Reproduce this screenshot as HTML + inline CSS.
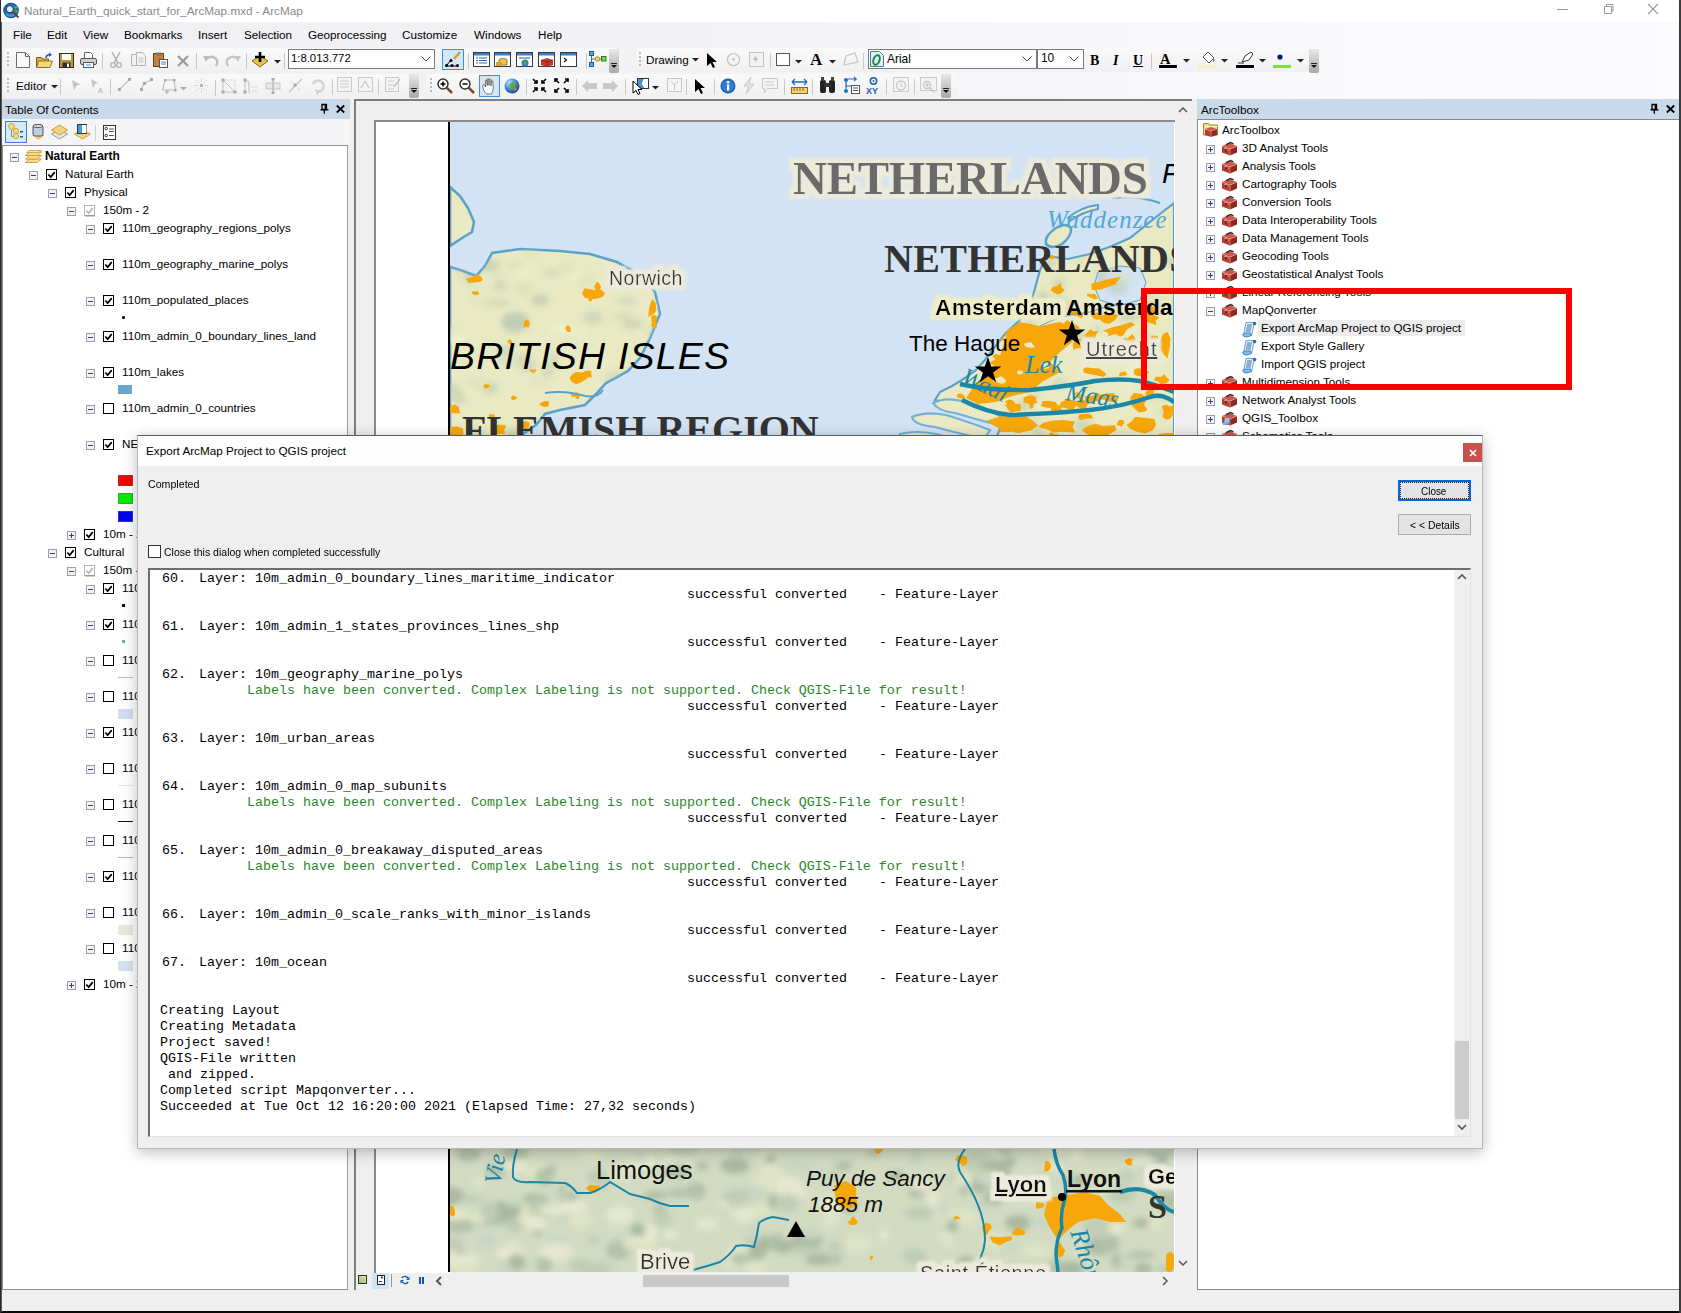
<!DOCTYPE html><html><head><meta charset="utf-8"><style>
*{box-sizing:border-box}
html,body{margin:0;padding:0}
body{width:1681px;height:1313px;position:relative;overflow:hidden;background:#f0eff0;font-family:"Liberation Sans",sans-serif;color:#000}
.a{position:absolute}
.t{position:absolute;white-space:pre;line-height:1;color:#000}
.m{position:absolute;white-space:pre;line-height:1;font-family:"Liberation Mono",monospace;font-size:13.33px;color:#000}
svg{position:absolute;overflow:visible}
</style></head><body><div class="a" style="left:0px;top:0px;width:1681px;height:22px;background:#ffffff"></div>
<svg style="left:3px;top:2px" width="17" height="17" viewBox="0 0 17 17"><circle cx="8" cy="8.5" r="7.8" fill="#1a4f8a"/><circle cx="8" cy="8.5" r="6.5" fill="#2a78b8"/><path d="M3 12q3 3 8 1" stroke="#3a9ae0" stroke-width="2" fill="none"/><circle cx="6.8" cy="7.2" r="3.6" fill="#cfeefa" stroke="#1a2a3a" stroke-width="1"/><path d="M12 6l2-1.5M12.5 10l2-1" stroke="#49c040" stroke-width="1.8"/><path d="M10 10L15.5 15.5" stroke="#7a3a20" stroke-width="2"/></svg>
<div class="t" style="left:24px;top:5.07px;font-size:11.75px;color:#8a8a8a">Natural_Earth_quick_start_for_ArcMap.mxd - ArcMap</div>
<div class="a" style="left:1557px;top:9px;width:11px;height:1px;background:#999"></div>
<svg style="left:1602px;top:3px" width="12" height="12" viewBox="0 0 12 12"><path d="M2.5 3.5h7v7h-7z M4.5 3.5v-2h6.5v6.5h-1.5" fill="none" stroke="#999" stroke-width="1"/></svg>
<svg style="left:1647px;top:3px" width="12" height="12" viewBox="0 0 12 12"><path d="M1 1L11 11M11 1L1 11" stroke="#999" stroke-width="1.1"/></svg>
<div class="a" style="left:0px;top:22px;width:1681px;height:77px;background:linear-gradient(90deg,#efeef0 0%,#f3f2f4 40%,#f9f8fa 80%,#fbfafc 100%)"></div>
<div class="t" style="left:13px;top:29.119999999999997px;font-size:11.7px;">File</div>
<div class="t" style="left:47px;top:29.119999999999997px;font-size:11.7px;">Edit</div>
<div class="t" style="left:83px;top:29.119999999999997px;font-size:11.7px;">View</div>
<div class="t" style="left:124px;top:29.119999999999997px;font-size:11.7px;">Bookmarks</div>
<div class="t" style="left:198px;top:29.119999999999997px;font-size:11.7px;">Insert</div>
<div class="t" style="left:244px;top:29.119999999999997px;font-size:11.7px;">Selection</div>
<div class="t" style="left:308px;top:29.119999999999997px;font-size:11.7px;">Geoprocessing</div>
<div class="t" style="left:402px;top:29.119999999999997px;font-size:11.7px;">Customize</div>
<div class="t" style="left:474px;top:29.119999999999997px;font-size:11.7px;">Windows</div>
<div class="t" style="left:538px;top:29.119999999999997px;font-size:11.7px;">Help</div>
<div class="a" style="left:4px;top:48px;width:614px;height:24px;background:linear-gradient(#f9f9fa,#f1f1f3);border-radius:2px"></div>
<div class="a" style="left:636px;top:48px;width:684px;height:24px;background:linear-gradient(#f9f9fa,#f1f1f3);border-radius:2px"></div>
<div class="a" style="left:4px;top:74px;width:414px;height:23px;background:linear-gradient(#f9f9fa,#f1f1f3);border-radius:2px"></div>
<div class="a" style="left:426px;top:74px;width:532px;height:23px;background:linear-gradient(#f9f9fa,#f1f1f3);border-radius:2px"></div>
<div class="a" style="left:7px;top:52px;width:2px;height:2px;background:#b8b8b8"></div>
<div class="a" style="left:7px;top:56px;width:2px;height:2px;background:#b8b8b8"></div>
<div class="a" style="left:7px;top:60px;width:2px;height:2px;background:#b8b8b8"></div>
<div class="a" style="left:7px;top:64px;width:2px;height:2px;background:#b8b8b8"></div>
<svg style="left:16px;top:52px" width="14" height="16" viewBox="0 0 14 16"><path d="M0.5 0.5h9l4 4v11h-13z" fill="#f7f9fc" stroke="#6c6c6c"/><path d="M9.5 0.5v4h4" fill="none" stroke="#6c6c6c"/></svg>
<svg style="left:36px;top:52px" width="17" height="16" viewBox="0 0 17 16"><path d="M0.5 5.5h5l1 1.5h6v8h-12z" fill="#d9b040" stroke="#7c5a10"/><path d="M2.5 9h14l-2.5 6.5h-13.5z" fill="#f4d978" stroke="#7c5a10" stroke-width=".8"/><path d="M10 6 q0 -3 4 -3.5" stroke="#1f5fa8" stroke-width="1.5" fill="none"/><path d="M13 0.5l3 2.3l-3 2.2z" fill="#1f5fa8"/></svg>
<svg style="left:59px;top:53px" width="15" height="15" viewBox="0 0 15 15"><rect x="0.5" y="0.5" width="14" height="14" fill="#b49a48" stroke="#3a2a0a"/><rect x="3" y="1" width="9" height="6" fill="#fafafa"/><rect x="3.5" y="9.5" width="8" height="5" fill="#2e2e2e"/><rect x="8" y="10.5" width="2" height="3.5" fill="#eee"/></svg>
<svg style="left:80px;top:52px" width="17" height="16" viewBox="0 0 17 16"><path d="M4.5 0.5h6l2 2v4h-8z" fill="#fff" stroke="#666"/><rect x="0.5" y="6.5" width="16" height="6" rx="1.5" fill="#cfcfcf" stroke="#555"/><rect x="3.5" y="10.5" width="10" height="5" fill="#fff" stroke="#555"/><path d="M6 13h5" stroke="#4a8ad0"/></svg>
<div class="a" style="left:102px;top:53px;width:1px;height:16px;background:#c8c8c8"></div>
<svg style="left:109px;top:52px" width="14" height="16" viewBox="0 0 14 16"><path d="M3 0l6 11M11 0l-6 11" stroke="#b0b0b0" stroke-width="1.5"/><circle cx="4" cy="13" r="2.3" fill="none" stroke="#b0b0b0" stroke-width="1.3"/><circle cx="10" cy="13" r="2.3" fill="none" stroke="#b0b0b0" stroke-width="1.3"/></svg>
<svg style="left:131px;top:52px" width="15" height="16" viewBox="0 0 15 16"><path d="M0.5 2.5h7l2 2v9h-9z" fill="#f3f3f3" stroke="#b3b3b3"/><path d="M5.5 0.5h6l3 3v10h-9z" fill="#f3f3f3" stroke="#b3b3b3"/><path d="M7.5 6h5M7.5 8h5M7.5 10h5" stroke="#c0c0c0"/></svg>
<svg style="left:153px;top:52px" width="15" height="16" viewBox="0 0 15 16"><rect x="0.5" y="1.5" width="10" height="13" fill="#c9803a" stroke="#6b3e14"/><rect x="3" y="0.5" width="5" height="3" fill="#777"/><rect x="6.5" y="7.5" width="8" height="8" fill="#fff" stroke="#555"/><path d="M8 10h5M8 12h5" stroke="#4a8ad0"/></svg>
<svg style="left:177px;top:55px" width="12" height="12" viewBox="0 0 12 12"><path d="M1 1L11 11M11 1L1 11" stroke="#9a9a9a" stroke-width="2.2"/></svg>
<div class="a" style="left:196px;top:53px;width:1px;height:16px;background:#c8c8c8"></div>
<svg style="left:203px;top:54px" width="16" height="13" viewBox="0 0 16 13"><path d="M3 5 q6 -5 11 1 q1 3 -1 6" fill="none" stroke="#bdbdbd" stroke-width="2.4"/><path d="M0 2l6 0l-3 6z" fill="#bdbdbd"/></svg>
<svg style="left:225px;top:54px" width="16" height="13" viewBox="0 0 16 13"><path d="M13 5 q-6 -5 -11 1 q-1 3 1 6" fill="none" stroke="#c4c4c4" stroke-width="2.4"/><path d="M16 2l-6 0l3 6z" fill="#c4c4c4"/></svg>
<div class="a" style="left:246px;top:53px;width:1px;height:16px;background:#c8c8c8"></div>
<svg style="left:251px;top:51px" width="18" height="18" viewBox="0 0 18 18"><path d="M1 10l8-5l8 5l-8 6z" fill="#e9c24a" stroke="#8a6d1a"/><path d="M9 1v10M4 6h10" stroke="#000" stroke-width="2.6"/></svg>
<svg style="left:274px;top:60px" width="7" height="4"><path d="M0 0h7l-3.5 3.5z" fill="#222"/></svg>
<div class="a" style="left:284px;top:53px;width:1px;height:16px;background:#c8c8c8"></div>
<div class="a" style="left:288px;top:49px;width:147px;height:20px;background:#fff;border:1px solid #7a7a7a"></div>
<div class="t" style="left:291px;top:53.49px;font-size:11.3px;">1:8.013.772</div>
<svg style="left:421px;top:56px" width="10" height="6"><path d="M0.5 0.5l4.5 4.5l4.5-4.5" fill="none" stroke="#444" stroke-width="1"/></svg>
<div class="a" style="left:442px;top:49px;width:22px;height:21px;background:#d5e6f7;border:1px solid #3d8ee0"></div>
<svg style="left:444px;top:51px" width="18" height="17" viewBox="0 0 18 17"><path d="M2 15h12M2 15l5-6" stroke="#000" stroke-width="1"/><circle cx="2.5" cy="14.5" r="1.5"/><circle cx="8" cy="14.5" r="1.5"/><circle cx="13.5" cy="14.5" r="1.5"/><circle cx="7" cy="9.5" r="1.5"/><path d="M10 8l6-7" stroke="#e39a1a" stroke-width="2.5"/></svg>
<div class="a" style="left:468px;top:53px;width:1px;height:16px;background:#c8c8c8"></div>
<svg style="left:473px;top:52px" width="17" height="15" viewBox="0 0 17 15"><rect x="0.5" y="0.5" width="16" height="14" fill="#fff" stroke="#3a3a3a"/><rect x="1" y="1" width="15" height="2.5" fill="#3d7cc9"/><path d="M3 6h2M6 6h8M3 8.5h2M6 8.5h8M3 11h2M6 11h8" stroke="#2a6ab8" stroke-width="1.2"/></svg>
<svg style="left:494px;top:52px" width="17" height="15" viewBox="0 0 17 15"><rect x="0.5" y="0.5" width="16" height="14" fill="#fff" stroke="#3a3a3a"/><rect x="1" y="1" width="15" height="2.5" fill="#3d7cc9"/><ellipse cx="9" cy="8" rx="4" ry="1.5" fill="#e8c84a" stroke="#8a6a1a" stroke-width=".8"/><rect x="5" y="8" width="8" height="5" fill="#e8c84a"/><path d="M5 8v5h8v-5" fill="none" stroke="#8a6a1a" stroke-width=".8"/><rect x="2" y="10" width="6" height="4" fill="#d4a830"/></svg>
<svg style="left:516px;top:52px" width="17" height="15" viewBox="0 0 17 15"><rect x="0.5" y="0.5" width="16" height="14" fill="#fff" stroke="#3a3a3a"/><rect x="1" y="1" width="15" height="2.5" fill="#3d7cc9"/><rect x="3" y="5" width="11" height="2" fill="#9ab"/><circle cx="9" cy="11" r="3.5" fill="#2f7fc0"/><path d="M7 10q2-2 4 0q0 2-2 3z" fill="#5aaa3a"/></svg>
<svg style="left:538px;top:52px" width="17" height="15" viewBox="0 0 17 15"><rect x="0.5" y="0.5" width="16" height="14" fill="#fff" stroke="#3a3a3a"/><rect x="1" y="1" width="15" height="2.5" fill="#3d7cc9"/><path d="M3 8l6-2l6 2v5l-6 2l-6-2z" fill="#c23a2e"/><path d="M3 8l6 2l6-2M9 10v5" fill="none" stroke="#8a1a14" stroke-width=".8"/></svg>
<svg style="left:560px;top:52px" width="17" height="15" viewBox="0 0 17 15"><rect x="0.5" y="0.5" width="16" height="14" fill="#fff" stroke="#3a3a3a"/><rect x="1" y="1" width="15" height="2.5" fill="#3d7cc9"/><path d="M4 6l2.5 2l-2.5 2" fill="none" stroke="#111" stroke-width="1.2"/></svg>
<div class="a" style="left:586px;top:53px;width:1px;height:16px;background:#c8c8c8"></div>
<svg style="left:589px;top:51px" width="18" height="16" viewBox="0 0 18 16"><path d="M2.5 3v10M2.5 8h13" stroke="#3a6fa0" stroke-width="1"/><rect x="0.5" y="0.5" width="4" height="4" fill="#5aa8e8" stroke="#1a5a9a"/><rect x="0.5" y="11.5" width="4" height="4" fill="#5aa8e8" stroke="#1a5a9a"/><circle cx="8.5" cy="8" r="2.3" fill="#f0d070" stroke="#9a7a2a" stroke-width=".8"/><rect x="12.5" y="5.5" width="4.5" height="4.5" fill="#8cd04a" stroke="#2a7a2a"/></svg>
<div class="a" style="left:609px;top:49px;width:10px;height:24px;background:linear-gradient(#e8e8e8,#a9a9a9);border-radius:0 0 2px 2px"></div>
<div class="a" style="left:611px;top:63px;width:6px;height:1px;background:#222"></div>
<svg style="left:611px;top:65px" width="6" height="4"><path d="M0 0h6l-3 3z" fill="#111"/></svg>
<div class="a" style="left:639px;top:52px;width:2px;height:2px;background:#b8b8b8"></div>
<div class="a" style="left:639px;top:56px;width:2px;height:2px;background:#b8b8b8"></div>
<div class="a" style="left:639px;top:60px;width:2px;height:2px;background:#b8b8b8"></div>
<div class="a" style="left:639px;top:64px;width:2px;height:2px;background:#b8b8b8"></div>
<div class="t" style="left:646px;top:54.12px;font-size:11.7px;">Drawing</div>
<svg style="left:692px;top:58px" width="7" height="4"><path d="M0 0h7l-3.5 3.5z" fill="#222"/></svg>
<svg style="left:706px;top:52px" width="12" height="16" viewBox="0 0 12 16"><path d="M1 1v13l3.5-3l2.5 5l2-1l-2.5-5h4.5z" fill="#000"/></svg>
<svg style="left:726px;top:52px" width="15" height="15" viewBox="0 0 15 15"><circle cx="7.5" cy="7.5" r="6" fill="none" stroke="#c0c0c0" stroke-width="1.2"/><rect x="6.5" y="6.5" width="2" height="2" fill="#aaa"/></svg>
<svg style="left:749px;top:52px" width="15" height="15" viewBox="0 0 15 15"><rect x="0.5" y="0.5" width="14" height="14" fill="#f2f2f2" stroke="#c4c4c4"/><path d="M4 7h5M6.5 4.5v5" stroke="#bbb" stroke-width="1.6"/></svg>
<div class="a" style="left:770px;top:53px;width:1px;height:16px;background:#c8c8c8"></div>
<div class="a" style="left:776px;top:53px;width:14px;height:13px;background:#fff;border:1px solid #555"></div>
<svg style="left:795px;top:60px" width="7" height="4"><path d="M0 0h7l-3.5 3.5z" fill="#222"/></svg>
<div class="t" style="left:810px;top:51.19px;font-size:17px;font-family:'Liberation Serif';font-weight:bold">A</div>
<svg style="left:829px;top:60px" width="7" height="4"><path d="M0 0h7l-3.5 3.5z" fill="#222"/></svg>
<svg style="left:843px;top:52px" width="16" height="15" viewBox="0 0 16 15"><path d="M1 13l2-9l9-3l3 9z" fill="none" stroke="#c6c6c6" stroke-width="1.2"/></svg>
<div class="a" style="left:863px;top:53px;width:1px;height:16px;background:#c8c8c8"></div>
<div class="a" style="left:868px;top:49px;width:169px;height:20px;background:#fff;border:1px solid #7a7a7a"></div>
<svg style="left:870px;top:51px" width="14" height="16" viewBox="0 0 14 16"><path d="M0.5 0.5h9l4 4v11h-13z" fill="#dfeffa" stroke="#4a7aa0"/><ellipse cx="6.5" cy="9" rx="3" ry="5" fill="none" stroke="#1f8a3a" stroke-width="2" transform="rotate(20 6.5 9)"/></svg>
<div class="t" style="left:887px;top:53.93px;font-size:11.9px;">Arial</div>
<svg style="left:1022px;top:56px" width="10" height="6"><path d="M0.5 0.5l4.5 4.5l4.5-4.5" fill="none" stroke="#444" stroke-width="1"/></svg>
<div class="a" style="left:1037px;top:49px;width:47px;height:20px;background:#fff;border:1px solid #7a7a7a"></div>
<div class="t" style="left:1041px;top:52.93px;font-size:11.9px;">10</div>
<svg style="left:1069px;top:56px" width="10" height="6"><path d="M0.5 0.5l4.5 4.5l4.5-4.5" fill="none" stroke="#444" stroke-width="1"/></svg>
<div class="t" style="left:1090px;top:53.980000000000004px;font-size:14px;font-family:'Liberation Serif';font-weight:bold">B</div>
<div class="t" style="left:1113px;top:53.980000000000004px;font-size:14px;font-family:'Liberation Serif';font-style:italic;font-weight:bold">I</div>
<div class="t" style="left:1133px;top:53.980000000000004px;font-size:14px;font-family:'Liberation Serif';font-weight:bold;text-decoration:underline">U</div>
<div class="a" style="left:1151px;top:53px;width:1px;height:16px;background:#c8c8c8"></div>
<div class="t" style="left:1160px;top:51.51px;font-size:14.5px;font-family:'Liberation Serif';font-weight:bold">A</div>
<div class="a" style="left:1159px;top:65px;width:18px;height:3px;background:#000"></div>
<svg style="left:1183px;top:59px" width="7" height="4"><path d="M0 0h7l-3.5 3.5z" fill="#222"/></svg>
<svg style="left:1200px;top:51px" width="16" height="14" viewBox="0 0 16 14"><path d="M3 6l5-5l6 6l-5 5z" fill="#fff" stroke="#555"/><path d="M13 7q2 2 0 4" fill="none" stroke="#666"/></svg>
<div class="a" style="left:1198px;top:65px;width:18px;height:3px;background:#f4f1c0"></div>
<svg style="left:1221px;top:59px" width="7" height="4"><path d="M0 0h7l-3.5 3.5z" fill="#222"/></svg>
<svg style="left:1237px;top:51px" width="18" height="14" viewBox="0 0 18 14"><path d="M5 11l3-6l6-4l2 2l-4 6z" fill="#fff" stroke="#333"/><path d="M1 12h6" stroke="#333"/></svg>
<div class="a" style="left:1236px;top:65px;width:18px;height:3px;background:#000"></div>
<svg style="left:1259px;top:59px" width="7" height="4"><path d="M0 0h7l-3.5 3.5z" fill="#222"/></svg>
<svg style="left:1277px;top:54px" width="6" height="6"><circle cx="3" cy="3" r="2.6" fill="#001a6e"/></svg>
<div class="a" style="left:1273px;top:65px;width:18px;height:3px;background:#7de33a"></div>
<svg style="left:1297px;top:59px" width="7" height="4"><path d="M0 0h7l-3.5 3.5z" fill="#222"/></svg>
<div class="a" style="left:1309px;top:49px;width:10px;height:24px;background:linear-gradient(#e8e8e8,#a9a9a9);border-radius:0 0 2px 2px"></div>
<div class="a" style="left:1311px;top:63px;width:6px;height:1px;background:#222"></div>
<svg style="left:1311px;top:65px" width="6" height="4"><path d="M0 0h6l-3 3z" fill="#111"/></svg>
<div class="a" style="left:7px;top:78px;width:2px;height:2px;background:#b8b8b8"></div>
<div class="a" style="left:7px;top:82px;width:2px;height:2px;background:#b8b8b8"></div>
<div class="a" style="left:7px;top:86px;width:2px;height:2px;background:#b8b8b8"></div>
<div class="a" style="left:7px;top:90px;width:2px;height:2px;background:#b8b8b8"></div>
<div class="t" style="left:16px;top:80.12px;font-size:11.7px;">Editor</div>
<svg style="left:51px;top:85px" width="7" height="4"><path d="M0 0h7l-3.5 3.5z" fill="#222"/></svg>
<div class="a" style="left:60px;top:79px;width:1px;height:16px;background:#c8c8c8"></div>
<svg style="left:71px;top:79px" width="12" height="12"><path d="M1 1l9 5h-4l-3 5z" fill="#c3c3c3"/></svg>
<svg style="left:90px;top:78px" width="16" height="16"><path d="M1 1l8 4.5h-3.5l-2.5 4.5z" fill="#c3c3c3"/><text x="7.5" y="15" font-size="8" font-weight="bold" fill="#c3c3c3" font-family="Liberation Sans">A</text></svg>
<div class="a" style="left:110px;top:79px;width:1px;height:16px;background:#c8c8c8"></div>
<svg style="left:118px;top:78px" width="13" height="13"><path d="M1 12L12 1" stroke="#c3c3c3" stroke-width="1.3"/><rect x="0" y="10" width="3" height="3" fill="#aaa"/><rect x="10" y="0" width="3" height="3" fill="#aaa"/></svg>
<svg style="left:140px;top:78px" width="14" height="13"><path d="M1 12L4 5L12 2" fill="none" stroke="#c3c3c3" stroke-width="1.3"/><rect x="0" y="10" width="3" height="3" fill="#aaa"/><rect x="3" y="4" width="3" height="3" fill="#aaa"/><rect x="10" y="0" width="3" height="3" fill="#aaa"/></svg>
<svg style="left:161px;top:78px" width="16" height="16" viewBox="0 0 16 16"><path d="M4 2h9l1.5 10h-13z" fill="none" stroke="#b9b9b9" stroke-width="1"/><rect x="3" y="1" width="2.5" height="2.5" fill="#a9a9a9"/><rect x="12" y="1" width="2.5" height="2.5" fill="#a9a9a9"/><rect x="13" y="11" width="2.5" height="2.5" fill="#a9a9a9"/><path d="M6 12v4M4 14h4" stroke="#aaa"/></svg>
<svg style="left:180px;top:87px" width="7" height="4"><path d="M0 0h7l-3.5 3.5z" fill="#aaa"/></svg>
<svg style="left:194px;top:78px" width="15" height="15" viewBox="0 0 15 15"><path d="M7.5 0v5M7.5 10v5M0 7.5h5M10 7.5h5M2 2l3 3M13 2l-3 3M2 13l3-3M13 13l-3-3" stroke="#cfcfcf" stroke-width="1" stroke-dasharray="1.5 1"/><rect x="6" y="6" width="3" height="3" fill="#b5b5b5"/></svg>
<div class="a" style="left:215px;top:80px;width:1px;height:16px;background:#c8c8c8"></div>
<svg style="left:221px;top:78px" width="16" height="16" viewBox="0 0 16 16"><path d="M2 2v12h12z" fill="none" stroke="#c0c0c0" stroke-width="1"/><path d="M2 2h12v12" fill="none" stroke="#ccc" stroke-dasharray="1.5 1"/><rect x="0.5" y="0.5" width="3" height="3" fill="#aaa"/><rect x="12.5" y="12.5" width="3" height="3" fill="#aaa"/><rect x="0.5" y="12.5" width="3" height="3" fill="#aaa"/></svg>
<svg style="left:243px;top:78px" width="16" height="16" viewBox="0 0 16 16"><path d="M2 2v13M2 2l4 2v11" fill="none" stroke="#bdbdbd" stroke-width="1"/><rect x="0.5" y="0.5" width="3" height="3" fill="#aaa"/><rect x="0.5" y="12.5" width="3" height="3" fill="#aaa"/><path d="M9 9h6M9 13h6" stroke="#ccc" stroke-dasharray="2 1"/></svg>
<svg style="left:265px;top:78px" width="16" height="16" viewBox="0 0 16 16"><rect x="1" y="5" width="14" height="6" fill="#e6e6e6" stroke="#c6c6c6"/><path d="M8 1v14" stroke="#b5b5b5" stroke-width="1.3"/><rect x="6.5" y="0" width="3" height="2.5" fill="#aaa"/><rect x="6.5" y="13.5" width="3" height="2.5" fill="#aaa"/></svg>
<svg style="left:288px;top:78px" width="15" height="15" viewBox="0 0 15 15"><path d="M1 14L14 1" stroke="#c4c4c4" stroke-width="1.2"/><rect x="5.5" y="5.5" width="3" height="3" fill="#aaa"/><path d="M3 3l2 2M10 10l2 2" stroke="#ccc"/></svg>
<svg style="left:310px;top:78px" width="16" height="16" viewBox="0 0 16 16"><path d="M3 6A5.5 5.5 0 1 1 8 13.5" fill="none" stroke="#d4d4d4" stroke-width="2.5"/><path d="M5 12l3 1.5l-1 3" fill="none" stroke="#ccc" stroke-width="1.5"/></svg>
<div class="a" style="left:332px;top:79px;width:1px;height:16px;background:#c8c8c8"></div>
<svg style="left:337px;top:77px" width="15" height="15"><rect x="0.5" y="0.5" width="14" height="14" fill="#f4f4f4" stroke="#cacaca"/><path d="M3 4h9M3 7h9M3 10h9" stroke="#cfcfcf"/></svg>
<svg style="left:358px;top:77px" width="15" height="15"><rect x="0.5" y="0.5" width="14" height="14" fill="#f4f4f4" stroke="#cacaca"/><path d="M3 11l4-7l4 7" fill="none" stroke="#bbb"/></svg>
<div class="a" style="left:378px;top:79px;width:1px;height:16px;background:#c8c8c8"></div>
<svg style="left:385px;top:77px" width="16" height="15"><rect x="0.5" y="0.5" width="13" height="14" fill="#f4f4f4" stroke="#cacaca"/><path d="M3 4h6M3 8h6M3 12h6" stroke="#ccc"/><path d="M9 10l6-8" stroke="#c0c0c0" stroke-width="1.5"/></svg>
<div class="a" style="left:409px;top:74px;width:10px;height:24px;background:linear-gradient(#e8e8e8,#a9a9a9);border-radius:0 0 2px 2px"></div>
<div class="a" style="left:411px;top:88px;width:6px;height:1px;background:#222"></div>
<svg style="left:411px;top:90px" width="6" height="4"><path d="M0 0h6l-3 3z" fill="#111"/></svg>
<div class="a" style="left:430px;top:78px;width:2px;height:2px;background:#b8b8b8"></div>
<div class="a" style="left:430px;top:82px;width:2px;height:2px;background:#b8b8b8"></div>
<div class="a" style="left:430px;top:86px;width:2px;height:2px;background:#b8b8b8"></div>
<div class="a" style="left:430px;top:90px;width:2px;height:2px;background:#b8b8b8"></div>
<svg style="left:437px;top:78px" width="16" height="16" viewBox="0 0 16 16"><circle cx="6" cy="6" r="5" fill="#fff" stroke="#333" stroke-width="1.5"/><path d="M9.5 9.5L15 15" stroke="#7a4a20" stroke-width="2.5"/><path d="M3.5 6h5M6 3.5v5" stroke="#000" stroke-width="1.5"/></svg>
<svg style="left:459px;top:78px" width="16" height="16" viewBox="0 0 16 16"><circle cx="6" cy="6" r="5" fill="#fff" stroke="#333" stroke-width="1.5"/><path d="M9.5 9.5L15 15" stroke="#7a4a20" stroke-width="2.5"/><path d="M3.5 6h5" stroke="#000" stroke-width="1.5"/></svg>
<div class="a" style="left:479px;top:75px;width:21px;height:22px;background:#d5e6f7;border:1px solid #3d8ee0"></div>
<svg style="left:482px;top:77px" width="15" height="18" viewBox="0 0 15 18"><path d="M4.5 17 C2.5 15 1 12.5 1 10.5 L0.8 8 Q1.3 7 2.3 7.8 L3.5 10 L3.5 3.5 Q4.2 2.5 5 3.5 L5.2 8.5 L5.2 2 Q6 1 6.8 2 L7 8.5 L7.2 2.5 Q8 1.5 8.8 2.5 L9 8.8 L9.3 4 Q10 3 10.8 4 L11.2 11 Q11 15 9.5 17 Z" fill="#fff" stroke="#333" stroke-width=".65"/></svg>
<svg style="left:504px;top:78px" width="16" height="16" viewBox="0 0 16 16"><defs><radialGradient id="glb" cx=".35" cy=".3" r=".8"><stop offset="0" stop-color="#bfe4ff"/><stop offset=".5" stop-color="#3a8ad8"/><stop offset="1" stop-color="#1a3a8a"/></radialGradient></defs><circle cx="8" cy="8" r="7.5" fill="url(#glb)"/><path d="M8 4q3 -1 5 2q-1 2 -3 2q-2 2 -1 4q-2 1 -3 -1q1 -3 -1 -4q1 -2 3 -3z" fill="#6aa040" opacity=".9"/><path d="M10 9q2 0 3 2q-1 2 -3 2z" fill="#a08a40"/></svg>
<div class="a" style="left:526px;top:79px;width:1px;height:16px;background:#c8c8c8"></div>
<svg style="left:532px;top:78px" width="15" height="15" viewBox="0 0 15 15"><path d="M1 1l4 4M14 1l-4 4M1 14l4-4M14 14l-4-4" stroke="#000" stroke-width="1.6"/><path d="M5 2v3h-3M10 2v3h3M5 13v-3h-3M10 13v-3h3" fill="none" stroke="#000" stroke-width="1.6"/></svg>
<svg style="left:554px;top:78px" width="15" height="15" viewBox="0 0 15 15"><path d="M1 1l4 4M14 1l-4 4M1 14l4-4M14 14l-4-4" stroke="#000" stroke-width="1.6"/><path d="M1 4v-3h3M14 4v-3h-3M1 11v3h3M14 11v3h-3" fill="none" stroke="#000" stroke-width="1.6"/></svg>
<div class="a" style="left:576px;top:79px;width:1px;height:16px;background:#c8c8c8"></div>
<svg style="left:582px;top:80px" width="15" height="12" viewBox="0 0 15 12"><path d="M0 6l6-6v3h9v6h-9v3z" fill="#c9c9c9"/></svg>
<svg style="left:603px;top:80px" width="15" height="12" viewBox="0 0 15 12"><path d="M15 6l-6-6v3h-9v6h9v3z" fill="#c9c9c9"/></svg>
<div class="a" style="left:625px;top:79px;width:1px;height:16px;background:#c8c8c8"></div>
<svg style="left:632px;top:78px" width="17" height="17" viewBox="0 0 17 17"><rect x="5.5" y="0.5" width="11" height="10" fill="#fff" stroke="#333"/><path d="M6 1h5l-2 5l3 4h-6z" fill="#3a9ae0"/><path d="M11 1l-2 5l3 4" fill="none" stroke="#555" stroke-width=".7"/><path d="M1 3v12l3-2.5l2 4l2-1l-2-4h4z" fill="#fff" stroke="#000" stroke-width="1"/></svg>
<svg style="left:652px;top:86px" width="7" height="4"><path d="M0 0h7l-3.5 3.5z" fill="#222"/></svg>
<svg style="left:667px;top:78px" width="15" height="14" viewBox="0 0 15 14"><rect x="0.5" y="0.5" width="14" height="13" fill="#f7f7f7" stroke="#c4c4c4"/><path d="M4 3l3.5 4l3.5-4M7.5 7v5" fill="none" stroke="#c4c4c4"/></svg>
<div class="a" style="left:686px;top:79px;width:1px;height:16px;background:#c8c8c8"></div>
<svg style="left:694px;top:78px" width="12" height="16" viewBox="0 0 12 16"><path d="M1 1v13l3.5-3l2.5 5l2-1l-2.5-5h4.5z" fill="#000"/></svg>
<div class="a" style="left:714px;top:79px;width:1px;height:16px;background:#c8c8c8"></div>
<svg style="left:720px;top:78px" width="16" height="16" viewBox="0 0 16 16"><circle cx="8" cy="8" r="7.5" fill="#1f5fb0"/><circle cx="8" cy="8" r="6" fill="#2f7fd0"/><rect x="7" y="6.5" width="2.2" height="6" fill="#fff"/><circle cx="8.1" cy="4.2" r="1.3" fill="#fff"/></svg>
<svg style="left:742px;top:77px" width="14" height="17" viewBox="0 0 14 17"><path d="M9 0l-7 9h5l-3 8l8-10h-5z" fill="#e6e6e6" stroke="#c8c8c8"/></svg>
<svg style="left:762px;top:78px" width="16" height="15" viewBox="0 0 16 15"><path d="M0.5 0.5h15v10h-10l-3 4v-4h-2z" fill="#f4f4f4" stroke="#c8c8c8"/><path d="M3 4h9M3 7h9" stroke="#ccc"/></svg>
<div class="a" style="left:784px;top:79px;width:1px;height:16px;background:#c8c8c8"></div>
<svg style="left:791px;top:78px" width="17" height="16" viewBox="0 0 17 16"><path d="M1 4h15M1 4l3-3M1 4l3 3M16 4l-3-3M16 4l-3 3" stroke="#1a6fc0" stroke-width="1.3" fill="none"/><rect x="0.5" y="9.5" width="16" height="6" fill="#f2d27a" stroke="#8c6a1a"/><path d="M3 10v3M6 10v3M9 10v3M12 10v3" stroke="#8c6a1a"/></svg>
<div class="a" style="left:812px;top:79px;width:1px;height:16px;background:#c8c8c8"></div>
<svg style="left:819px;top:77px" width="17" height="17" viewBox="0 0 17 17"><rect x="1" y="3" width="6" height="13" rx="2" fill="#222"/><rect x="10" y="3" width="6" height="13" rx="2" fill="#222"/><rect x="5" y="6" width="7" height="4" fill="#333"/><rect x="2" y="0" width="3" height="4" fill="#444"/><rect x="12" y="0" width="3" height="4" fill="#444"/></svg>
<svg style="left:843px;top:77px" width="17" height="17" viewBox="0 0 17 17"><circle cx="3" cy="3" r="2" fill="#1a6fc0"/><circle cx="3" cy="14" r="2" fill="#1a6fc0"/><path d="M3 5v7M3 9h5M5 2h8l-2-2M13 2l-2 2" stroke="#1a6fc0" fill="none" stroke-width="1.2"/><rect x="8.5" y="8.5" width="8" height="8" fill="#fff" stroke="#555"/><path d="M10 11h5M10 13.5h5" stroke="#555"/></svg>
<svg style="left:865px;top:77px" width="17" height="18" viewBox="0 0 17 18"><circle cx="8.5" cy="4" r="3.2" fill="none" stroke="#1a5fb0" stroke-width="1.5"/><circle cx="8.5" cy="4" r="1" fill="#1a5fb0"/><text x="1" y="17" font-size="9" font-weight="bold" fill="#1a5fb0" font-family="Liberation Sans">XY</text></svg>
<div class="a" style="left:886px;top:79px;width:1px;height:16px;background:#c8c8c8"></div>
<svg style="left:893px;top:77px" width="16" height="15" viewBox="0 0 16 15"><rect x="0.5" y="0.5" width="15" height="14" fill="#f4f4f4" stroke="#cacaca"/><circle cx="8" cy="8.5" r="4.5" fill="none" stroke="#cacaca" stroke-width="1.3"/><path d="M8 6v3h2" stroke="#c8c8c8" fill="none"/></svg>
<div class="a" style="left:914px;top:79px;width:1px;height:16px;background:#c8c8c8"></div>
<svg style="left:920px;top:77px" width="17" height="16" viewBox="0 0 17 16"><rect x="0.5" y="0.5" width="16" height="13" fill="#f4f4f4" stroke="#cacaca"/><circle cx="7" cy="8" r="3.5" fill="none" stroke="#c4c4c4" stroke-width="1.3"/><path d="M9.5 10.5l5 5M5 8h4M7 6v4" stroke="#c0c0c0" stroke-width="1.2"/></svg>
<div class="a" style="left:941px;top:74px;width:10px;height:24px;background:linear-gradient(#e8e8e8,#a9a9a9);border-radius:0 0 2px 2px"></div>
<div class="a" style="left:943px;top:88px;width:6px;height:1px;background:#222"></div>
<svg style="left:943px;top:90px" width="6" height="4"><path d="M0 0h6l-3 3z" fill="#111"/></svg>
<div class="a" style="left:0px;top:1290px;width:1681px;height:21px;background:#f0eff0"></div>
<div class="a" style="left:0px;top:1311px;width:1681px;height:2px;background:#0a0a0a"></div>
<div class="a" style="left:0px;top:0px;width:1px;height:1313px;background:#2a2a2a"></div>
<div class="a" style="left:1px;top:22px;width:1px;height:1290px;background:#5a5a5a"></div>
<div class="a" style="left:1679px;top:0px;width:2px;height:1313px;background:#3a3a3a"></div>
<div class="a" style="left:2px;top:99px;width:348px;height:20px;background:#c9d9e9"></div>
<div class="t" style="left:5px;top:104.12px;font-size:11.7px;">Table Of Contents</div>
<svg style="left:320px;top:103px" width="9" height="11" viewBox="0 0 9 11"><path d="M2 1.5h4.5v5h-4.5z" fill="none" stroke="#000" stroke-width="1.3"/><rect x="4.6" y="1" width="2.4" height="5.5" fill="#000"/><path d="M0.5 6.8h8" stroke="#000" stroke-width="1.3"/><path d="M4.3 7v3.8" stroke="#000" stroke-width="1.3"/></svg>
<svg style="left:336px;top:105px" width="9" height="8" viewBox="0 0 9 8"><path d="M0.8 0.5L8.2 7.5M8.2 0.5L0.8 7.5" stroke="#000" stroke-width="1.8"/></svg>
<div class="a" style="left:2px;top:119px;width:348px;height:26px;background:#f5f4f6"></div>
<div class="a" style="left:5px;top:121px;width:22px;height:22px;background:#d8eaf9;border:1px solid #2b85e0"></div>
<svg style="left:8px;top:123px" width="17" height="17" viewBox="0 0 17 17"><circle cx="3.5" cy="3.5" r="3" fill="#f0d88a" stroke="#c8a840"/><circle cx="8" cy="8" r="2.6" fill="#f0d88a" stroke="#c8a840"/><circle cx="8" cy="13" r="2.6" fill="#f0d88a" stroke="#c8a840"/><path d="M3.5 6.5v7h2" fill="none" stroke="#888"/><rect x="12" y="8" width="3" height="1.5" fill="#1a5a8a"/><rect x="12" y="13" width="3" height="1.5" fill="#1a5a8a"/></svg>
<svg style="left:32px;top:124px" width="13" height="16" viewBox="0 0 13 16"><path d="M0 11h13l-6.5 5z" fill="#f0cf6a"/><rect x="1" y="1" width="10" height="11" rx="2" fill="#b9d2e6" stroke="#555"/><ellipse cx="6" cy="2" rx="5" ry="1.5" fill="#dfeaf3" stroke="#555"/></svg>
<svg style="left:51px;top:124px" width="17" height="16" viewBox="0 0 17 16"><path d="M0.5 10l8-4l8 4l-8 5z" fill="#e8e8e8" stroke="#999"/><path d="M0.5 6l8-5l8 5l-8 5z" fill="#f2d27a" stroke="#c8a030"/></svg>
<svg style="left:74px;top:124px" width="17" height="16" viewBox="0 0 17 16"><path d="M0.5 10l8-4l8 4l-8 5z" fill="#f2d27a" stroke="#c8a030"/><rect x="3.5" y="0.5" width="9" height="9" fill="#3aa0e0" stroke="#333"/><path d="M8 1v8h4.5v-8z" fill="#fff"/></svg>
<div class="a" style="left:95px;top:125px;width:1px;height:16px;background:#cfcfcf"></div>
<svg style="left:103px;top:125px" width="13" height="15" viewBox="0 0 13 15"><rect x="0.5" y="0.5" width="12" height="14" fill="#fff" stroke="#333"/><circle cx="3.2" cy="3.5" r="1.2" fill="none" stroke="#333"/><circle cx="3.2" cy="10.5" r="1.2" fill="none" stroke="#333"/><path d="M6 4h5M6 6.5h5M6 10.5h5" stroke="#555"/></svg>
<div class="a" style="left:2px;top:145px;width:346px;height:1145px;background:#fff;border:1px solid #8f8f8f;border-right-color:#a0a0a0"></div>
<div class="a" style="left:350px;top:99px;width:4px;height:1191px;background:#f0eff0"></div>
<svg style="left:10px;top:153px" width="9" height="9" viewBox="0 0 9 9"><rect x="0.5" y="0.5" width="8" height="8" fill="#f4f4f4" stroke="#9aa0a8"/><path d="M2 4.5h5" stroke="#2b3f8a"/></svg>
<svg style="left:25px;top:150px" width="17" height="13" viewBox="0 0 17 13"><path d="M0.5 12.5h12l4-3.5h-12z" fill="#f6dc8c" stroke="#c9a240" stroke-width="1"/><path d="M0.5 9h12l4-3.5h-12z" fill="#f6dc8c" stroke="#c9a240" stroke-width="1"/><path d="M0.5 5.5h12l4-3.5h-12z" fill="#f6dc8c" stroke="#c9a240" stroke-width="1"/><path d="M1.5 2.5h12l3-2h-12z" fill="#f8e49c" stroke="#c9a240" stroke-width=".8"/></svg>
<div class="t" style="left:45px;top:150.93px;font-size:11.9px;font-weight:bold">Natural Earth</div>
<svg style="left:29px;top:171px" width="9" height="9" viewBox="0 0 9 9"><rect x="0.5" y="0.5" width="8" height="8" fill="#f4f4f4" stroke="#9aa0a8"/><path d="M2 4.5h5" stroke="#2b3f8a"/></svg>
<svg style="left:46px;top:169px" width="12" height="12" viewBox="0 0 12 12"><rect x="0.5" y="0.5" width="10" height="10" fill="#fff" stroke="#000"/><path d="M2.3 5.5l2.4 2.6l4-5" fill="none" stroke="#000" stroke-width="1.7"/></svg>
<div class="t" style="left:65px;top:168.12px;font-size:11.7px;">Natural Earth</div>
<svg style="left:48px;top:189px" width="9" height="9" viewBox="0 0 9 9"><rect x="0.5" y="0.5" width="8" height="8" fill="#f4f4f4" stroke="#9aa0a8"/><path d="M2 4.5h5" stroke="#2b3f8a"/></svg>
<svg style="left:65px;top:187px" width="12" height="12" viewBox="0 0 12 12"><rect x="0.5" y="0.5" width="10" height="10" fill="#fff" stroke="#000"/><path d="M2.3 5.5l2.4 2.6l4-5" fill="none" stroke="#000" stroke-width="1.7"/></svg>
<div class="t" style="left:84px;top:186.12px;font-size:11.7px;">Physical</div>
<svg style="left:67px;top:207px" width="9" height="9" viewBox="0 0 9 9"><rect x="0.5" y="0.5" width="8" height="8" fill="#f4f4f4" stroke="#9aa0a8"/><path d="M2 4.5h5" stroke="#2b3f8a"/></svg>
<svg style="left:84px;top:205px" width="12" height="12" viewBox="0 0 12 12"><rect x="0.5" y="0.5" width="10" height="10" fill="#fff" stroke="#b8b8b8"/><path d="M2.3 5.5l2.4 2.6l4-5" fill="none" stroke="#b8b8b8" stroke-width="1.7"/><rect x="1" y="10" width="10" height="1.5" fill="#999"/></svg>
<div class="t" style="left:103px;top:204.12px;font-size:11.7px;">150m - 2</div>
<svg style="left:86px;top:225px" width="9" height="9" viewBox="0 0 9 9"><rect x="0.5" y="0.5" width="8" height="8" fill="#f4f4f4" stroke="#9aa0a8"/><path d="M2 4.5h5" stroke="#2b3f8a"/></svg>
<svg style="left:103px;top:223px" width="12" height="12" viewBox="0 0 12 12"><rect x="0.5" y="0.5" width="10" height="10" fill="#fff" stroke="#000"/><path d="M2.3 5.5l2.4 2.6l4-5" fill="none" stroke="#000" stroke-width="1.7"/></svg>
<div class="t" style="left:122px;top:222.12px;font-size:11.7px;">110m_geography_regions_polys</div>
<svg style="left:86px;top:261px" width="9" height="9" viewBox="0 0 9 9"><rect x="0.5" y="0.5" width="8" height="8" fill="#f4f4f4" stroke="#9aa0a8"/><path d="M2 4.5h5" stroke="#2b3f8a"/></svg>
<svg style="left:103px;top:259px" width="12" height="12" viewBox="0 0 12 12"><rect x="0.5" y="0.5" width="10" height="10" fill="#fff" stroke="#000"/><path d="M2.3 5.5l2.4 2.6l4-5" fill="none" stroke="#000" stroke-width="1.7"/></svg>
<div class="t" style="left:122px;top:258.12px;font-size:11.7px;">110m_geography_marine_polys</div>
<svg style="left:86px;top:297px" width="9" height="9" viewBox="0 0 9 9"><rect x="0.5" y="0.5" width="8" height="8" fill="#f4f4f4" stroke="#9aa0a8"/><path d="M2 4.5h5" stroke="#2b3f8a"/></svg>
<svg style="left:103px;top:295px" width="12" height="12" viewBox="0 0 12 12"><rect x="0.5" y="0.5" width="10" height="10" fill="#fff" stroke="#000"/><path d="M2.3 5.5l2.4 2.6l4-5" fill="none" stroke="#000" stroke-width="1.7"/></svg>
<div class="t" style="left:122px;top:294.12px;font-size:11.7px;">110m_populated_places</div>
<div class="a" style="left:122px;top:316px;width:3px;height:3px;background:#111;border-radius:1px"></div>
<svg style="left:86px;top:333px" width="9" height="9" viewBox="0 0 9 9"><rect x="0.5" y="0.5" width="8" height="8" fill="#f4f4f4" stroke="#9aa0a8"/><path d="M2 4.5h5" stroke="#2b3f8a"/></svg>
<svg style="left:103px;top:331px" width="12" height="12" viewBox="0 0 12 12"><rect x="0.5" y="0.5" width="10" height="10" fill="#fff" stroke="#000"/><path d="M2.3 5.5l2.4 2.6l4-5" fill="none" stroke="#000" stroke-width="1.7"/></svg>
<div class="t" style="left:122px;top:330.12px;font-size:11.7px;">110m_admin_0_boundary_lines_land</div>
<svg style="left:86px;top:369px" width="9" height="9" viewBox="0 0 9 9"><rect x="0.5" y="0.5" width="8" height="8" fill="#f4f4f4" stroke="#9aa0a8"/><path d="M2 4.5h5" stroke="#2b3f8a"/></svg>
<svg style="left:103px;top:367px" width="12" height="12" viewBox="0 0 12 12"><rect x="0.5" y="0.5" width="10" height="10" fill="#fff" stroke="#000"/><path d="M2.3 5.5l2.4 2.6l4-5" fill="none" stroke="#000" stroke-width="1.7"/></svg>
<div class="t" style="left:122px;top:366.12px;font-size:11.7px;">110m_lakes</div>
<div class="a" style="left:118px;top:385px;width:14px;height:9px;background:#6aa6cf"></div>
<svg style="left:86px;top:405px" width="9" height="9" viewBox="0 0 9 9"><rect x="0.5" y="0.5" width="8" height="8" fill="#f4f4f4" stroke="#9aa0a8"/><path d="M2 4.5h5" stroke="#2b3f8a"/></svg>
<svg style="left:103px;top:403px" width="12" height="12" viewBox="0 0 12 12"><rect x="0.5" y="0.5" width="10" height="10" fill="#fff" stroke="#000"/></svg>
<div class="t" style="left:122px;top:402.12px;font-size:11.7px;">110m_admin_0_countries</div>
<svg style="left:86px;top:441px" width="9" height="9" viewBox="0 0 9 9"><rect x="0.5" y="0.5" width="8" height="8" fill="#f4f4f4" stroke="#9aa0a8"/><path d="M2 4.5h5" stroke="#2b3f8a"/></svg>
<svg style="left:103px;top:439px" width="12" height="12" viewBox="0 0 12 12"><rect x="0.5" y="0.5" width="10" height="10" fill="#fff" stroke="#000"/><path d="M2.3 5.5l2.4 2.6l4-5" fill="none" stroke="#000" stroke-width="1.7"/></svg>
<div class="t" style="left:122px;top:438.12px;font-size:11.7px;">NE</div>
<div class="a" style="left:118px;top:475px;width:15px;height:11px;background:#f00;border:1px solid #a33"></div>
<div class="a" style="left:118px;top:493px;width:15px;height:11px;background:#0e0;border:1px solid #3a3"></div>
<div class="a" style="left:118px;top:511px;width:15px;height:11px;background:#00f;border:1px solid #33a"></div>
<svg style="left:67px;top:531px" width="9" height="9" viewBox="0 0 9 9"><rect x="0.5" y="0.5" width="8" height="8" fill="#f4f4f4" stroke="#9aa0a8"/><path d="M2 4.5h5" stroke="#2b3f8a"/><path d="M4.5 2v5" stroke="#2b3f8a"/></svg>
<svg style="left:84px;top:529px" width="12" height="12" viewBox="0 0 12 12"><rect x="0.5" y="0.5" width="10" height="10" fill="#fff" stroke="#000"/><path d="M2.3 5.5l2.4 2.6l4-5" fill="none" stroke="#000" stroke-width="1.7"/></svg>
<div class="t" style="left:103px;top:528.12px;font-size:11.7px;">10m - 2</div>
<svg style="left:48px;top:549px" width="9" height="9" viewBox="0 0 9 9"><rect x="0.5" y="0.5" width="8" height="8" fill="#f4f4f4" stroke="#9aa0a8"/><path d="M2 4.5h5" stroke="#2b3f8a"/></svg>
<svg style="left:65px;top:547px" width="12" height="12" viewBox="0 0 12 12"><rect x="0.5" y="0.5" width="10" height="10" fill="#fff" stroke="#000"/><path d="M2.3 5.5l2.4 2.6l4-5" fill="none" stroke="#000" stroke-width="1.7"/></svg>
<div class="t" style="left:84px;top:546.12px;font-size:11.7px;">Cultural</div>
<svg style="left:67px;top:567px" width="9" height="9" viewBox="0 0 9 9"><rect x="0.5" y="0.5" width="8" height="8" fill="#f4f4f4" stroke="#9aa0a8"/><path d="M2 4.5h5" stroke="#2b3f8a"/></svg>
<svg style="left:84px;top:565px" width="12" height="12" viewBox="0 0 12 12"><rect x="0.5" y="0.5" width="10" height="10" fill="#fff" stroke="#b8b8b8"/><path d="M2.3 5.5l2.4 2.6l4-5" fill="none" stroke="#b8b8b8" stroke-width="1.7"/><rect x="1" y="10" width="10" height="1.5" fill="#999"/></svg>
<div class="t" style="left:103px;top:564.12px;font-size:11.7px;">150m - 2</div>
<svg style="left:86px;top:585px" width="9" height="9" viewBox="0 0 9 9"><rect x="0.5" y="0.5" width="8" height="8" fill="#f4f4f4" stroke="#9aa0a8"/><path d="M2 4.5h5" stroke="#2b3f8a"/></svg>
<svg style="left:103px;top:583px" width="12" height="12" viewBox="0 0 12 12"><rect x="0.5" y="0.5" width="10" height="10" fill="#fff" stroke="#000"/><path d="M2.3 5.5l2.4 2.6l4-5" fill="none" stroke="#000" stroke-width="1.7"/></svg>
<div class="t" style="left:122px;top:582.12px;font-size:11.7px;">110m_xxx</div>
<svg style="left:86px;top:621px" width="9" height="9" viewBox="0 0 9 9"><rect x="0.5" y="0.5" width="8" height="8" fill="#f4f4f4" stroke="#9aa0a8"/><path d="M2 4.5h5" stroke="#2b3f8a"/></svg>
<svg style="left:103px;top:619px" width="12" height="12" viewBox="0 0 12 12"><rect x="0.5" y="0.5" width="10" height="10" fill="#fff" stroke="#000"/><path d="M2.3 5.5l2.4 2.6l4-5" fill="none" stroke="#000" stroke-width="1.7"/></svg>
<div class="t" style="left:122px;top:618.12px;font-size:11.7px;">110m_xxx</div>
<svg style="left:86px;top:657px" width="9" height="9" viewBox="0 0 9 9"><rect x="0.5" y="0.5" width="8" height="8" fill="#f4f4f4" stroke="#9aa0a8"/><path d="M2 4.5h5" stroke="#2b3f8a"/></svg>
<svg style="left:103px;top:655px" width="12" height="12" viewBox="0 0 12 12"><rect x="0.5" y="0.5" width="10" height="10" fill="#fff" stroke="#000"/></svg>
<div class="t" style="left:122px;top:654.12px;font-size:11.7px;">110m_xxx</div>
<svg style="left:86px;top:693px" width="9" height="9" viewBox="0 0 9 9"><rect x="0.5" y="0.5" width="8" height="8" fill="#f4f4f4" stroke="#9aa0a8"/><path d="M2 4.5h5" stroke="#2b3f8a"/></svg>
<svg style="left:103px;top:691px" width="12" height="12" viewBox="0 0 12 12"><rect x="0.5" y="0.5" width="10" height="10" fill="#fff" stroke="#000"/></svg>
<div class="t" style="left:122px;top:690.12px;font-size:11.7px;">110m_xxx</div>
<svg style="left:86px;top:729px" width="9" height="9" viewBox="0 0 9 9"><rect x="0.5" y="0.5" width="8" height="8" fill="#f4f4f4" stroke="#9aa0a8"/><path d="M2 4.5h5" stroke="#2b3f8a"/></svg>
<svg style="left:103px;top:727px" width="12" height="12" viewBox="0 0 12 12"><rect x="0.5" y="0.5" width="10" height="10" fill="#fff" stroke="#000"/><path d="M2.3 5.5l2.4 2.6l4-5" fill="none" stroke="#000" stroke-width="1.7"/></svg>
<div class="t" style="left:122px;top:726.12px;font-size:11.7px;">110m_xxx</div>
<svg style="left:86px;top:765px" width="9" height="9" viewBox="0 0 9 9"><rect x="0.5" y="0.5" width="8" height="8" fill="#f4f4f4" stroke="#9aa0a8"/><path d="M2 4.5h5" stroke="#2b3f8a"/></svg>
<svg style="left:103px;top:763px" width="12" height="12" viewBox="0 0 12 12"><rect x="0.5" y="0.5" width="10" height="10" fill="#fff" stroke="#000"/></svg>
<div class="t" style="left:122px;top:762.12px;font-size:11.7px;">110m_xxx</div>
<svg style="left:86px;top:801px" width="9" height="9" viewBox="0 0 9 9"><rect x="0.5" y="0.5" width="8" height="8" fill="#f4f4f4" stroke="#9aa0a8"/><path d="M2 4.5h5" stroke="#2b3f8a"/></svg>
<svg style="left:103px;top:799px" width="12" height="12" viewBox="0 0 12 12"><rect x="0.5" y="0.5" width="10" height="10" fill="#fff" stroke="#000"/></svg>
<div class="t" style="left:122px;top:798.12px;font-size:11.7px;">110m_xxx</div>
<svg style="left:86px;top:837px" width="9" height="9" viewBox="0 0 9 9"><rect x="0.5" y="0.5" width="8" height="8" fill="#f4f4f4" stroke="#9aa0a8"/><path d="M2 4.5h5" stroke="#2b3f8a"/></svg>
<svg style="left:103px;top:835px" width="12" height="12" viewBox="0 0 12 12"><rect x="0.5" y="0.5" width="10" height="10" fill="#fff" stroke="#000"/></svg>
<div class="t" style="left:122px;top:834.12px;font-size:11.7px;">110m_xxx</div>
<svg style="left:86px;top:873px" width="9" height="9" viewBox="0 0 9 9"><rect x="0.5" y="0.5" width="8" height="8" fill="#f4f4f4" stroke="#9aa0a8"/><path d="M2 4.5h5" stroke="#2b3f8a"/></svg>
<svg style="left:103px;top:871px" width="12" height="12" viewBox="0 0 12 12"><rect x="0.5" y="0.5" width="10" height="10" fill="#fff" stroke="#000"/><path d="M2.3 5.5l2.4 2.6l4-5" fill="none" stroke="#000" stroke-width="1.7"/></svg>
<div class="t" style="left:122px;top:870.12px;font-size:11.7px;">110m_xxx</div>
<svg style="left:86px;top:909px" width="9" height="9" viewBox="0 0 9 9"><rect x="0.5" y="0.5" width="8" height="8" fill="#f4f4f4" stroke="#9aa0a8"/><path d="M2 4.5h5" stroke="#2b3f8a"/></svg>
<svg style="left:103px;top:907px" width="12" height="12" viewBox="0 0 12 12"><rect x="0.5" y="0.5" width="10" height="10" fill="#fff" stroke="#000"/></svg>
<div class="t" style="left:122px;top:906.12px;font-size:11.7px;">110m_xxx</div>
<svg style="left:86px;top:945px" width="9" height="9" viewBox="0 0 9 9"><rect x="0.5" y="0.5" width="8" height="8" fill="#f4f4f4" stroke="#9aa0a8"/><path d="M2 4.5h5" stroke="#2b3f8a"/></svg>
<svg style="left:103px;top:943px" width="12" height="12" viewBox="0 0 12 12"><rect x="0.5" y="0.5" width="10" height="10" fill="#fff" stroke="#000"/></svg>
<div class="t" style="left:122px;top:942.12px;font-size:11.7px;">110m_xxx</div>
<svg style="left:67px;top:981px" width="9" height="9" viewBox="0 0 9 9"><rect x="0.5" y="0.5" width="8" height="8" fill="#f4f4f4" stroke="#9aa0a8"/><path d="M2 4.5h5" stroke="#2b3f8a"/><path d="M4.5 2v5" stroke="#2b3f8a"/></svg>
<svg style="left:84px;top:979px" width="12" height="12" viewBox="0 0 12 12"><rect x="0.5" y="0.5" width="10" height="10" fill="#fff" stroke="#000"/><path d="M2.3 5.5l2.4 2.6l4-5" fill="none" stroke="#000" stroke-width="1.7"/></svg>
<div class="t" style="left:103px;top:978.12px;font-size:11.7px;">10m - 2</div>
<div class="a" style="left:122px;top:604px;width:3px;height:3px;background:#111"></div>
<div class="a" style="left:122px;top:640px;width:3px;height:3px;background:#7ab"></div>
<div class="a" style="left:118px;top:677px;width:15px;height:1px;background:#9cc3dd"></div>
<div class="a" style="left:118px;top:709px;width:15px;height:10px;background:#cfdff0"></div>
<div class="a" style="left:118px;top:785px;width:15px;height:1px;background:#e6e6e6"></div>
<div class="a" style="left:118px;top:821px;width:15px;height:1px;background:#111"></div>
<div class="a" style="left:118px;top:857px;width:15px;height:1px;background:#b5b5b5"></div>
<div class="a" style="left:118px;top:925px;width:15px;height:10px;background:#e8e8dc"></div>
<div class="a" style="left:118px;top:961px;width:15px;height:10px;background:#d4e2f0"></div>
<div class="a" style="left:354px;top:99px;width:838px;height:1191px;background:#f0eff0;border-top:2px solid #7d7d7d;border-left:2px solid #7d7d7d"></div>
<div class="a" style="left:374px;top:120px;width:801px;height:1153px;background:#fff;border-top:2px solid #8a8a8a;border-left:2px solid #8a8a8a"></div>
<div class="a" style="left:1175px;top:101px;width:17px;height:1172px;background:#f0eff0"></div>
<svg style="left:1178px;top:107px" width="10" height="6"><path d="M1 5l4-4l4 4" fill="none" stroke="#555" stroke-width="1.5"/></svg>
<svg style="left:1178px;top:1260px" width="10" height="6"><path d="M1 1l4 4l4-4" fill="none" stroke="#555" stroke-width="1.5"/></svg>
<div class="a" style="left:356px;top:1273px;width:819px;height:17px;background:#f0eff0"></div>
<div class="a" style="left:643px;top:1275px;width:146px;height:12px;background:#c9c9c9"></div>
<svg style="left:1162px;top:1276px" width="6" height="10"><path d="M1 1l4 4l-4 4" fill="none" stroke="#555" stroke-width="1.5"/></svg>
<svg style="left:436px;top:1276px" width="6" height="10"><path d="M5 1l-4 4l4 4" fill="none" stroke="#555" stroke-width="2"/></svg>
<svg style="left:358px;top:1275px" width="9" height="9" viewBox="0 0 9 9"><defs><linearGradient id="dvg" x1="0" y1="1" x2="1" y2="0"><stop offset="0" stop-color="#8cc070"/><stop offset="1" stop-color="#f0e0a0"/></linearGradient></defs><rect x="0.5" y="0.5" width="8" height="8" fill="url(#dvg)" stroke="#333"/></svg>
<div class="a" style="left:372px;top:1273px;width:17px;height:16px;background:#cfe4f7"></div>
<svg style="left:377px;top:1275px" width="8" height="10" viewBox="0 0 8 10"><rect x="0.5" y="0.5" width="7" height="9" fill="#fff" stroke="#222"/><rect x="4" y="1.5" width="2" height="2" fill="#444"/><path d="M2 6.5h3" stroke="#333"/></svg>
<div class="a" style="left:391px;top:1274px;width:1px;height:13px;background:#999"></div>
<svg style="left:400px;top:1275px" width="10" height="10" viewBox="0 0 10 10"><path d="M8.5 4A3.8 3.8 0 0 0 1.8 3" fill="none" stroke="#1a5fb0" stroke-width="1.4"/><path d="M1.5 6A3.8 3.8 0 0 0 8.2 7" fill="none" stroke="#1a5fb0" stroke-width="1.4"/><path d="M9.5 1.5v3.5h-3.5z M0.5 8.5v-3.5h3.5z" fill="#1a5fb0"/></svg>
<div class="a" style="left:419px;top:1277px;width:2px;height:7px;background:#1a4fa0"></div>
<div class="a" style="left:422px;top:1277px;width:2px;height:7px;background:#1a4fa0"></div>
<svg style="left:450px;top:122px;overflow:hidden" width="724" height="1150" viewBox="450 122 724 1150"><defs><filter id="blur2"><feGaussianBlur stdDeviation="3"/></filter><filter id="halo" x="-20%" y="-50%" width="140%" height="200%"><feMorphology operator="dilate" radius="5" in="SourceAlpha" result="d"/><feGaussianBlur in="d" stdDeviation="1" result="d"/><feFlood flood-color="#ebeadb"/><feComposite in2="d" operator="in"/><feMerge><feMergeNode/><feMergeNode in="SourceGraphic"/></feMerge></filter><filter id="haloY" x="-20%" y="-50%" width="140%" height="200%"><feMorphology operator="dilate" radius="5" in="SourceAlpha" result="d"/><feGaussianBlur in="d" stdDeviation="1" result="d"/><feFlood flood-color="#efedc6"/><feComposite in2="d" operator="in"/><feMerge><feMergeNode/><feMergeNode in="SourceGraphic"/></feMerge></filter></defs><rect x="450" y="122" width="724" height="1150" fill="#d3e3f3"/><path d="M450 187 L460 196 L468 208 L474 222 L472 232 L462 238 L450 246 Z" fill="#e9eac4" stroke="#5aa2cc" stroke-width="2.6"/><path d="M450 267 L463 271 L476 276 L485 266 L492 253 L520 249 L560 251 L590 254 L617 262 L640 275 L655 292 L660 314 L650 338 L640 358 L628 371 L606 383 L596 394 L585 405 L560 410 L545 414 L536 425 L520 436 L505 442 L450 442 Z" fill="#e9eac4" stroke="#5aa2cc" stroke-width="2.6"/><clipPath id="engclip"><path d="M450 267 L463 271 L476 276 L485 266 L492 253 L520 249 L560 251 L590 254 L617 262 L640 275 L655 292 L660 314 L650 338 L640 358 L628 371 L606 383 L596 394 L585 405 L560 410 L545 414 L536 425 L520 436 L505 442 L450 442 Z"/></clipPath><g clip-path="url(#engclip)"><g filter="url(#blur2)" opacity=".5"><ellipse cx="500" cy="354" rx="7" ry="6" fill="#d8dcbc"/><ellipse cx="464" cy="253" rx="11" ry="4" fill="#c6d2b4"/><ellipse cx="490" cy="388" rx="8" ry="6" fill="#aebfa8"/><ellipse cx="584" cy="279" rx="9" ry="7" fill="#d8dcbc"/><ellipse cx="532" cy="253" rx="10" ry="4" fill="#d8dcbc"/><ellipse cx="459" cy="400" rx="11" ry="4" fill="#d8dcbc"/><ellipse cx="601" cy="419" rx="10" ry="8" fill="#aebfa8"/><ellipse cx="603" cy="361" rx="12" ry="4" fill="#f2f1d0"/><ellipse cx="470" cy="276" rx="6" ry="8" fill="#aebfa8"/><ellipse cx="614" cy="414" rx="7" ry="7" fill="#d8dcbc"/><ellipse cx="524" cy="362" rx="9" ry="8" fill="#b9c9b0"/><ellipse cx="630" cy="440" rx="9" ry="4" fill="#f2f1d0"/><ellipse cx="653" cy="424" rx="9" ry="7" fill="#c6d2b4"/><ellipse cx="583" cy="440" rx="6" ry="4" fill="#aebfa8"/><ellipse cx="629" cy="440" rx="5" ry="7" fill="#aebfa8"/><ellipse cx="638" cy="254" rx="7" ry="5" fill="#b9c9b0"/><ellipse cx="459" cy="368" rx="4" ry="7" fill="#f2f1d0"/><ellipse cx="566" cy="427" rx="6" ry="4" fill="#b9c9b0"/><ellipse cx="515" cy="265" rx="9" ry="3" fill="#c6d2b4"/><ellipse cx="654" cy="306" rx="6" ry="6" fill="#f2f1d0"/><ellipse cx="516" cy="434" rx="11" ry="5" fill="#aebfa8"/><ellipse cx="633" cy="324" rx="11" ry="6" fill="#b9c9b0"/><ellipse cx="580" cy="431" rx="8" ry="5" fill="#c6d2b4"/><ellipse cx="647" cy="334" rx="6" ry="5" fill="#f2f1d0"/><ellipse cx="452" cy="330" rx="9" ry="3" fill="#d8dcbc"/><ellipse cx="574" cy="276" rx="9" ry="5" fill="#f2f1d0"/><ellipse cx="593" cy="318" rx="10" ry="7" fill="#b9c9b0"/><ellipse cx="574" cy="433" rx="4" ry="5" fill="#aebfa8"/><ellipse cx="513" cy="365" rx="5" ry="4" fill="#f2f1d0"/><ellipse cx="627" cy="301" rx="10" ry="4" fill="#b9c9b0"/><ellipse cx="654" cy="381" rx="5" ry="6" fill="#f2f1d0"/><ellipse cx="500" cy="286" rx="7" ry="6" fill="#b9c9b0"/><ellipse cx="576" cy="432" rx="9" ry="4" fill="#c6d2b4"/><ellipse cx="467" cy="392" rx="6" ry="6" fill="#f2f1d0"/><ellipse cx="497" cy="273" rx="8" ry="4" fill="#d8dcbc"/><ellipse cx="489" cy="303" rx="10" ry="6" fill="#d8dcbc"/><ellipse cx="523" cy="275" rx="6" ry="7" fill="#f2f1d0"/><ellipse cx="548" cy="372" rx="6" ry="6" fill="#b9c9b0"/><ellipse cx="643" cy="280" rx="4" ry="8" fill="#d8dcbc"/><ellipse cx="657" cy="333" rx="12" ry="8" fill="#c6d2b4"/><ellipse cx="457" cy="338" rx="10" ry="7" fill="#f2f1d0"/><ellipse cx="564" cy="421" rx="11" ry="7" fill="#f2f1d0"/><ellipse cx="475" cy="297" rx="4" ry="7" fill="#d8dcbc"/><ellipse cx="644" cy="422" rx="11" ry="6" fill="#b9c9b0"/><ellipse cx="551" cy="273" rx="8" ry="4" fill="#b9c9b0"/><ellipse cx="560" cy="329" rx="12" ry="6" fill="#f2f1d0"/><ellipse cx="476" cy="437" rx="8" ry="7" fill="#b9c9b0"/><ellipse cx="524" cy="288" rx="8" ry="7" fill="#c6d2b4"/><ellipse cx="500" cy="303" rx="11" ry="4" fill="#b9c9b0"/><ellipse cx="552" cy="360" rx="7" ry="7" fill="#c6d2b4"/><ellipse cx="506" cy="351" rx="7" ry="5" fill="#b9c9b0"/><ellipse cx="630" cy="399" rx="4" ry="3" fill="#aebfa8"/><ellipse cx="655" cy="414" rx="5" ry="6" fill="#f2f1d0"/><ellipse cx="483" cy="264" rx="7" ry="5" fill="#f2f1d0"/><ellipse cx="526" cy="287" rx="7" ry="4" fill="#d8dcbc"/><ellipse cx="451" cy="389" rx="10" ry="6" fill="#b9c9b0"/><ellipse cx="528" cy="366" rx="10" ry="5" fill="#b9c9b0"/><ellipse cx="581" cy="333" rx="7" ry="5" fill="#f2f1d0"/><ellipse cx="538" cy="383" rx="8" ry="4" fill="#d8dcbc"/><ellipse cx="507" cy="363" rx="10" ry="4" fill="#c6d2b4"/><ellipse cx="635" cy="430" rx="7" ry="7" fill="#f2f1d0"/><ellipse cx="476" cy="383" rx="12" ry="7" fill="#d8dcbc"/><ellipse cx="616" cy="378" rx="10" ry="6" fill="#b9c9b0"/><ellipse cx="620" cy="388" rx="8" ry="4" fill="#aebfa8"/><ellipse cx="459" cy="268" rx="5" ry="7" fill="#c6d2b4"/><ellipse cx="622" cy="316" rx="11" ry="3" fill="#b9c9b0"/><ellipse cx="591" cy="411" rx="12" ry="6" fill="#b9c9b0"/><ellipse cx="458" cy="397" rx="8" ry="7" fill="#b9c9b0"/><ellipse cx="566" cy="269" rx="8" ry="6" fill="#d8dcbc"/><ellipse cx="488" cy="265" rx="12" ry="6" fill="#aebfa8"/><ellipse cx="515" cy="322" rx="14" ry="10" fill="#98b0a4"/><ellipse cx="540" cy="300" rx="10" ry="6" fill="#a8bca8"/></g></g><path d="M605.0 293.0 L602.4 297.2 L594.0 299.2 L584.4 297.8 L582.1 293.0 L584.5 288.3 L594.0 289.9 L600.9 289.6Z" fill="#f7a70a"/><path d="M601.1 287.0 L599.4 291.0 L597.0 293.6 L595.5 289.4 L594.1 287.0 L595.3 284.2 L597.0 281.8 L599.2 283.3Z" fill="#f7a70a"/><path d="M482.5 279.0 L481.9 281.2 L477.0 282.3 L468.5 282.8 L466.1 279.0 L472.4 276.9 L477.0 274.0 L481.5 277.0Z" fill="#f7a70a"/><path d="M656.4 310.0 L654.0 314.0 L652.0 314.8 L648.3 317.3 L648.9 310.0 L649.8 305.6 L652.0 298.9 L655.7 302.7Z" fill="#f7a70a"/><path d="M656.5 322.0 L656.9 327.8 L654.0 328.2 L651.6 326.8 L651.7 322.0 L651.1 316.3 L654.0 315.1 L656.9 316.2Z" fill="#f7a70a"/><path d="M587.8 378.0 L581.3 382.2 L576.0 384.2 L571.3 381.6 L569.6 378.0 L571.8 374.8 L576.0 372.1 L582.9 372.6Z" fill="#f7a70a"/><path d="M591.0 374.0 L592.0 377.2 L588.0 377.5 L585.0 376.4 L581.7 374.0 L584.5 371.2 L588.0 370.6 L591.5 371.2Z" fill="#f7a70a"/><path d="M536.5 371.0 L534.4 371.9 L533.0 373.8 L531.7 371.9 L529.4 371.0 L530.3 369.2 L533.0 369.8 L535.6 369.3Z" fill="#f7a70a"/><path d="M591.8 300.0 L591.5 301.5 L590.0 301.2 L589.1 300.9 L588.5 300.0 L588.1 298.1 L590.0 298.5 L591.7 298.3Z" fill="#f7a70a"/><path d="M479.0 293.0 L477.9 294.9 L475.0 294.8 L473.1 294.2 L471.9 293.0 L472.4 291.3 L475.0 291.6 L477.5 291.3Z" fill="#f7a70a"/><path d="M529.7 324.0 L528.7 327.6 L526.0 326.5 L523.1 327.8 L524.0 324.0 L524.1 321.5 L526.0 319.6 L528.8 320.2Z" fill="#f7a70a"/><path d="M570.6 328.0 L570.8 331.8 L568.0 332.1 L566.2 330.4 L565.4 328.0 L566.4 325.9 L568.0 325.3 L569.5 326.0Z" fill="#f7a70a"/><path d="M512.3 342.0 L512.0 345.0 L510.0 344.2 L509.1 343.4 L507.2 342.0 L508.5 339.8 L510.0 339.2 L511.1 340.3Z" fill="#f7a70a"/><path d="M576.2 395.0 L575.7 396.8 L573.0 396.9 L571.0 396.3 L571.1 395.0 L570.2 393.1 L573.0 393.7 L575.1 393.6Z" fill="#f7a70a"/><path d="M490.8 386.0 L488.5 387.0 L487.0 388.4 L484.1 387.9 L483.7 386.0 L484.4 384.3 L487.0 384.6 L489.0 384.7Z" fill="#f7a70a"/><path d="M459.3 410.0 L460.4 413.6 L455.0 413.3 L450.9 412.7 L446.6 410.0 L449.6 406.4 L455.0 404.5 L459.1 407.3Z" fill="#f7a70a"/><path d="M549.0 404.0 L548.2 406.5 L544.0 406.9 L541.1 405.8 L539.4 404.0 L541.5 402.5 L544.0 401.3 L548.9 401.0Z" fill="#f7a70a"/><path d="M517.1 398.0 L515.3 399.6 L513.0 400.0 L511.2 399.2 L511.0 398.0 L511.3 396.8 L513.0 395.5 L515.7 396.2Z" fill="#f7a70a"/><path d="M494.7 416.0 L494.6 417.7 L492.0 418.4 L489.5 417.6 L488.6 416.0 L489.4 414.3 L492.0 414.2 L494.5 414.4Z" fill="#f7a70a"/><path d="M463.6 433.0 L462.6 437.2 L457.0 440.3 L450.5 437.9 L450.3 433.0 L449.3 427.2 L457.0 426.3 L463.0 428.5Z" fill="#f7a70a"/><path d="M504.3 430.0 L505.1 433.7 L500.0 434.0 L494.4 434.0 L493.2 430.0 L493.8 425.6 L500.0 424.4 L506.1 425.6Z" fill="#f7a70a"/><path d="M529.5 425.0 L529.2 427.4 L526.0 428.6 L522.4 427.7 L522.5 425.0 L522.4 422.3 L526.0 421.1 L529.3 422.6Z" fill="#f7a70a"/><path d="M579.8 396.0 L578.9 398.9 L577.0 399.0 L575.6 398.2 L575.5 396.0 L575.2 393.3 L577.0 392.0 L578.4 393.9Z" fill="#f7a70a"/><path d="M545 393 Q565 390 585 396 Q598 398 603 390" fill="none" stroke="#5aa2cc" stroke-width="2"/><path d="M1174 203 L1160 214 L1140 230 L1130 238 L1112 246 L1090 254 L1068 259 L1046 256 L1040 270 L1034 292 L1030 305 L1020 320 L1005 334 L994 348 L985 360 L975 371 L962 380 L952 386 L940 392 L935 400 L950 404 L975 410 L990 418 L1000 428 L995 442 L1174 442 Z" fill="#e9eac4" stroke="#5aa2cc" stroke-width="2.2"/><path d="M1098 272 L1120 266 L1140 268 L1146 282 L1140 300 L1118 306 L1100 300 L1094 286 Z" fill="#d3e3f3" stroke="#5aa2cc" stroke-width="1"/><path d="M1046 244 Q1044 236 1056 228 Q1066 222 1071 228 Q1072 236 1062 244 Q1052 250 1046 244 Z" fill="#e9eac4" stroke="#5aa2cc" stroke-width="2.5"/><path d="M1068 218 Q1080 207 1098 205 L1098 209 Q1082 212 1070 221 Z" fill="#e9eac4" stroke="#5aa2cc" stroke-width="2"/><path d="M1112 198 Q1140 196 1160 203" fill="none" stroke="#5aa2cc" stroke-width="2"/><path d="M933 403 Q945 397 962 401 Q985 408 1002 417 L998 425 Q975 419 955 413 Q938 411 933 403Z" fill="#e9eac4" stroke="#72b0d8" stroke-width="2.2"/><path d="M912 417 Q926 411 946 415 Q966 421 990 430 L984 439 Q957 433 935 427 Q914 425 912 417Z" fill="#e9eac4" stroke="#72b0d8" stroke-width="2.2"/><path d="M900 434 Q916 430 936 434 Q952 438 962 442 L900 442Z" fill="#e9eac4" stroke="#72b0d8" stroke-width="2.2"/><clipPath id="nlclip"><path d="M1174 203 L1160 214 L1140 230 L1130 238 L1112 246 L1090 254 L1068 259 L1046 256 L1040 270 L1034 292 L1030 305 L1020 320 L1005 334 L994 348 L985 360 L975 371 L962 380 L952 386 L940 392 L935 400 L950 404 L975 410 L990 418 L1000 428 L995 442 L1174 442 Z"/></clipPath><g clip-path="url(#nlclip)"><g filter="url(#blur2)" opacity=".55"><ellipse cx="1039" cy="435" rx="5" ry="7" fill="#b9c9b0"/><ellipse cx="1024" cy="406" rx="8" ry="5" fill="#b9c9b0"/><ellipse cx="1080" cy="337" rx="8" ry="4" fill="#aebfa8"/><ellipse cx="1016" cy="295" rx="4" ry="4" fill="#aebfa8"/><ellipse cx="1083" cy="425" rx="10" ry="6" fill="#b9c9b0"/><ellipse cx="1173" cy="262" rx="9" ry="5" fill="#b9c9b0"/><ellipse cx="1059" cy="383" rx="8" ry="6" fill="#c6d2b4"/><ellipse cx="1101" cy="277" rx="5" ry="8" fill="#aebfa8"/><ellipse cx="1122" cy="278" rx="11" ry="5" fill="#d8dcbc"/><ellipse cx="1153" cy="305" rx="7" ry="7" fill="#c6d2b4"/><ellipse cx="1028" cy="365" rx="8" ry="5" fill="#f2f1d0"/><ellipse cx="1165" cy="412" rx="8" ry="4" fill="#c6d2b4"/><ellipse cx="1062" cy="305" rx="9" ry="7" fill="#d8dcbc"/><ellipse cx="1159" cy="355" rx="7" ry="8" fill="#f2f1d0"/><ellipse cx="1060" cy="301" rx="7" ry="5" fill="#aebfa8"/><ellipse cx="1030" cy="326" rx="5" ry="6" fill="#b9c9b0"/><ellipse cx="1035" cy="397" rx="6" ry="3" fill="#aebfa8"/><ellipse cx="1059" cy="283" rx="7" ry="4" fill="#aebfa8"/><ellipse cx="1098" cy="328" rx="5" ry="3" fill="#b9c9b0"/><ellipse cx="1006" cy="377" rx="10" ry="6" fill="#c6d2b4"/><ellipse cx="1141" cy="347" rx="10" ry="8" fill="#b9c9b0"/><ellipse cx="1033" cy="425" rx="7" ry="6" fill="#b9c9b0"/><ellipse cx="1129" cy="317" rx="12" ry="3" fill="#aebfa8"/><ellipse cx="1037" cy="418" rx="4" ry="8" fill="#d8dcbc"/><ellipse cx="1030" cy="315" rx="7" ry="4" fill="#c6d2b4"/><ellipse cx="1105" cy="345" rx="8" ry="4" fill="#b9c9b0"/><ellipse cx="1019" cy="388" rx="9" ry="7" fill="#d8dcbc"/><ellipse cx="1126" cy="387" rx="8" ry="5" fill="#f2f1d0"/><ellipse cx="1079" cy="260" rx="4" ry="4" fill="#c6d2b4"/><ellipse cx="1126" cy="386" rx="9" ry="3" fill="#f2f1d0"/><ellipse cx="1144" cy="351" rx="12" ry="7" fill="#d8dcbc"/><ellipse cx="1087" cy="385" rx="6" ry="4" fill="#d8dcbc"/><ellipse cx="1067" cy="350" rx="6" ry="4" fill="#f2f1d0"/><ellipse cx="1158" cy="393" rx="11" ry="8" fill="#c6d2b4"/><ellipse cx="1110" cy="265" rx="7" ry="7" fill="#f2f1d0"/><ellipse cx="1090" cy="370" rx="12" ry="7" fill="#f2f1d0"/><ellipse cx="1113" cy="271" rx="8" ry="5" fill="#d8dcbc"/><ellipse cx="1147" cy="310" rx="6" ry="6" fill="#d8dcbc"/><ellipse cx="1163" cy="390" rx="11" ry="6" fill="#f2f1d0"/><ellipse cx="1117" cy="288" rx="11" ry="6" fill="#b9c9b0"/><ellipse cx="1047" cy="263" rx="10" ry="4" fill="#aebfa8"/><ellipse cx="1136" cy="370" rx="11" ry="8" fill="#f2f1d0"/><ellipse cx="1140" cy="347" rx="6" ry="7" fill="#aebfa8"/><ellipse cx="1043" cy="297" rx="6" ry="6" fill="#aebfa8"/><ellipse cx="1043" cy="406" rx="9" ry="7" fill="#f2f1d0"/></g></g><path d="M1008 330 L1020 322 L1040 326 L1060 322 L1078 330 L1072 342 L1060 352 L1050 362 L1060 372 L1042 382 L1030 392 L1012 396 L996 402 L978 404 L966 398 L975 385 L990 372 L1000 356 Z" fill="#f7a70a"/><path d="M1065.0 290.0 L1062.1 292.6 L1059.6 294.2 L1056.5 294.0 L1053.6 292.7 L1050.7 290.0 L1052.6 286.7 L1056.5 286.1 L1060.8 282.7 L1061.8 287.7Z" fill="#f7a70a"/><path d="M1117.3 281.5 L1116.1 284.3 L1109.2 286.6 L1101.2 289.5 L1091.5 290.1 L1091.7 286.7 L1091.1 283.7 L1100.7 281.3 L1108.5 278.9 L1121.2 276.7Z" fill="#f7a70a"/><path d="M1096.5 296.0 L1097.9 298.1 L1094.9 299.5 L1091.9 298.0 L1090.0 297.3 L1086.9 296.0 L1087.6 293.6 L1091.9 294.0 L1094.3 293.7 L1095.7 294.8Z" fill="#f7a70a"/><path d="M1055.6 257.0 L1054.0 257.9 L1053.1 259.2 L1050.8 259.5 L1050.3 257.8 L1048.2 257.0 L1048.9 255.5 L1051.0 255.0 L1052.9 255.2 L1053.8 256.1Z" fill="#f7a70a"/><path d="M1135.1 324.7 L1126.8 329.6 L1124.4 333.8 L1116.1 334.0 L1107.8 336.3 L1108.5 332.9 L1102.8 330.7 L1113.1 327.1 L1120.2 325.4 L1131.1 321.9Z" fill="#f7a70a"/><path d="M1155.7 320.4 L1156.4 325.3 L1150.3 322.9 L1146.3 321.2 L1141.1 318.5 L1142.9 315.0 L1145.6 313.0 L1149.7 311.7 L1153.5 315.0 L1159.3 317.5Z" fill="#f7a70a"/><path d="M1170.0 345.0 L1169.2 350.3 L1167.5 358.4 L1163.3 354.2 L1160.5 350.7 L1159.6 345.0 L1160.8 339.7 L1162.9 334.1 L1167.5 332.0 L1170.5 338.2Z" fill="#f7a70a"/><path d="M1118.9 350.0 L1115.5 352.0 L1113.0 354.6 L1107.6 353.6 L1102.7 352.7 L1100.7 350.0 L1104.1 347.9 L1107.4 346.0 L1112.8 345.6 L1118.1 347.0Z" fill="#f7a70a"/><path d="M1106.4 374.3 L1103.9 376.7 L1096.8 375.4 L1091.8 374.6 L1084.0 372.9 L1082.9 369.6 L1085.8 367.2 L1093.1 368.3 L1099.1 368.6 L1103.4 371.3Z" fill="#f7a70a"/><path d="M1149.6 372.0 L1146.5 374.4 L1143.0 376.6 L1137.4 376.0 L1134.0 374.2 L1134.0 372.0 L1133.6 369.7 L1137.6 368.3 L1142.1 368.8 L1144.4 370.4Z" fill="#f7a70a"/><path d="M1169.5 380.0 L1166.9 383.0 L1163.6 384.1 L1160.3 384.3 L1158.8 382.0 L1153.9 380.0 L1156.0 376.4 L1160.8 376.9 L1164.3 374.2 L1166.7 377.2Z" fill="#f7a70a"/><path d="M1038.1 425.6 L1030.6 430.5 L1018.7 433.1 L1004.8 430.3 L994.5 426.2 L986.8 420.5 L997.8 417.3 L1006.6 414.8 L1021.3 413.7 L1031.1 419.5Z" fill="#f7a70a"/><path d="M1072.5 427.0 L1075.3 432.5 L1061.6 431.8 L1053.7 432.8 L1048.7 430.0 L1038.2 427.0 L1043.7 422.5 L1053.1 420.5 L1063.2 420.0 L1074.9 421.6Z" fill="#f7a70a"/><path d="M1116.5 430.0 L1110.8 433.4 L1105.1 436.7 L1095.2 436.4 L1086.8 434.1 L1081.8 430.0 L1087.4 426.1 L1095.2 423.7 L1103.0 426.0 L1115.0 425.3Z" fill="#f7a70a"/><path d="M1156.1 425.0 L1152.8 430.2 L1144.9 433.4 L1136.2 431.6 L1130.3 429.0 L1126.6 425.0 L1131.4 421.5 L1135.3 416.8 L1144.2 417.7 L1154.6 419.0Z" fill="#f7a70a"/><path d="M1173.8 412.0 L1172.2 416.0 L1169.7 419.1 L1166.1 419.6 L1162.6 417.2 L1163.7 412.0 L1161.8 406.0 L1166.2 404.7 L1169.4 406.3 L1174.5 405.7Z" fill="#f7a70a"/><path d="M1035.8 400.0 L1037.5 402.7 L1032.8 404.2 L1027.8 403.4 L1023.2 402.5 L1023.7 400.0 L1023.4 397.6 L1027.4 396.0 L1033.0 395.4 L1036.5 397.6Z" fill="#f7a70a"/><path d="M1116.7 398.0 L1118.4 400.4 L1113.4 402.2 L1107.3 401.3 L1103.9 399.8 L1100.7 398.0 L1099.4 394.9 L1106.3 393.4 L1114.1 393.0 L1115.3 396.4Z" fill="#f7a70a"/><path d="M964.8 396.0 L965.0 398.2 L961.3 398.5 L959.0 397.9 L957.4 397.2 L956.7 396.0 L957.0 394.7 L958.7 393.5 L961.3 393.5 L962.8 394.8Z" fill="#f7a70a"/><g clip-path="url(#nlclip)"><path d="M1020.1 406.7 L1018.2 408.2 L1014.6 410.2 L1010.4 407.8 L1008.8 406.8 L1002.9 404.9 L1009.4 404.3 L1013.9 404.7 L1017.9 405.3Z" fill="#f7a70a"/><path d="M1058.6 436.2 L1058.6 438.8 L1054.7 439.6 L1051.8 437.8 L1050.8 436.3 L1048.6 434.1 L1051.1 432.0 L1054.6 434.3 L1058.3 434.0Z" fill="#f7a70a"/><path d="M1152.3 395.0 L1152.1 398.8 L1148.8 398.1 L1147.2 396.5 L1145.2 394.9 L1145.9 391.9 L1148.0 389.8 L1151.3 388.8 L1154.5 391.0Z" fill="#f7a70a"/><path d="M1173.6 437.4 L1175.7 440.8 L1169.5 443.6 L1162.0 445.0 L1161.1 441.0 L1159.8 438.8 L1158.8 434.0 L1167.5 433.0 L1174.7 433.2Z" fill="#f7a70a"/><path d="M1009.1 362.9 L1007.8 365.4 L1002.2 365.7 L997.4 360.9 L992.4 356.2 L995.7 353.8 L1001.6 355.9 L1005.4 357.6 L1014.2 360.8Z" fill="#f7a70a"/><path d="M1012.5 333.4 L1010.3 335.9 L1006.6 337.6 L1004.4 334.0 L1002.9 331.4 L1003.0 328.0 L1006.4 326.1 L1009.0 329.2 L1010.8 330.6Z" fill="#f7a70a"/><path d="M1017.0 406.0 L1017.0 410.8 L1010.8 412.9 L1006.6 407.7 L1006.8 404.3 L1005.2 400.9 L1009.1 399.5 L1013.1 400.6 L1015.1 403.1Z" fill="#f7a70a"/><path d="M1010.9 422.8 L1012.8 426.1 L1010.1 426.8 L1008.2 426.5 L1006.1 425.8 L1004.5 422.9 L1005.8 420.3 L1007.7 417.7 L1010.1 420.4Z" fill="#f7a70a"/><path d="M1088.2 403.1 L1087.3 405.2 L1085.6 409.2 L1080.4 408.5 L1075.9 405.8 L1077.1 401.5 L1080.6 398.8 L1084.7 399.9 L1090.2 398.9Z" fill="#f7a70a"/><path d="M1011.1 362.5 L1011.5 365.2 L1008.8 366.6 L1006.4 365.8 L1003.1 365.6 L1002.7 362.6 L1004.2 359.8 L1007.5 361.2 L1010.3 360.1Z" fill="#f7a70a"/><path d="M1158.2 339.9 L1159.1 344.2 L1155.5 345.0 L1153.1 344.0 L1151.4 342.2 L1150.5 339.4 L1150.9 335.5 L1154.3 335.8 L1157.8 335.7Z" fill="#f7a70a"/><path d="M1007.7 339.1 L1002.0 341.1 L998.4 341.9 L995.3 341.1 L990.6 340.4 L991.8 338.0 L993.9 335.8 L998.2 337.0 L1000.6 337.7Z" fill="#f7a70a"/><path d="M1061.4 409.2 L1061.3 413.7 L1057.1 413.1 L1053.6 413.9 L1050.3 410.8 L1052.0 406.4 L1055.0 404.5 L1057.6 405.3 L1061.2 405.3Z" fill="#f7a70a"/><path d="M1027.3 357.3 L1026.4 362.1 L1020.6 360.9 L1016.7 360.0 L1012.8 357.1 L1014.2 352.9 L1018.6 352.0 L1022.4 351.2 L1027.9 352.6Z" fill="#f7a70a"/><path d="M1033.6 402.2 L1033.4 407.6 L1030.2 409.0 L1029.2 404.5 L1028.1 402.8 L1028.1 399.2 L1029.8 394.1 L1031.9 398.0 L1032.7 399.8Z" fill="#f7a70a"/><path d="M1071.3 324.2 L1070.8 327.5 L1069.2 330.3 L1066.5 330.6 L1064.5 326.9 L1064.5 322.4 L1066.7 320.6 L1068.4 320.7 L1069.6 322.2Z" fill="#f7a70a"/><path d="M1153.5 311.7 L1152.8 315.2 L1150.4 320.1 L1144.4 319.1 L1139.4 316.8 L1143.4 312.4 L1142.2 307.7 L1147.6 307.4 L1151.6 308.7Z" fill="#f7a70a"/><path d="M1147.4 409.2 L1144.9 411.8 L1138.8 412.2 L1133.6 407.7 L1133.4 404.4 L1131.4 400.3 L1135.9 398.0 L1143.9 400.6 L1144.5 405.7Z" fill="#f7a70a"/><path d="M1061.5 336.0 L1060.5 339.0 L1058.3 341.7 L1054.4 342.4 L1052.8 338.4 L1053.3 335.2 L1054.7 332.7 L1057.4 331.8 L1062.2 330.8Z" fill="#f7a70a"/><path d="M1021.6 407.2 L1020.4 410.7 L1018.1 411.3 L1016.5 411.3 L1013.2 411.5 L1013.0 407.4 L1014.2 404.5 L1016.6 403.9 L1019.4 403.7Z" fill="#f7a70a"/><path d="M1083.2 316.1 L1081.7 318.3 L1076.2 315.8 L1071.0 315.2 L1068.7 312.1 L1068.3 309.1 L1072.9 308.3 L1078.5 310.8 L1082.6 313.4Z" fill="#f7a70a"/><path d="M1137.0 341.8 L1136.4 346.1 L1131.0 348.5 L1127.0 344.4 L1125.9 341.8 L1123.1 338.5 L1127.9 337.9 L1132.3 334.1 L1135.4 338.4Z" fill="#f7a70a"/><path d="M1092.4 416.7 L1092.7 418.3 L1087.1 418.6 L1080.0 420.2 L1078.6 418.1 L1078.2 416.5 L1079.6 414.2 L1087.8 413.6 L1091.8 415.3Z" fill="#f7a70a"/><path d="M1082.3 396.9 L1082.5 399.1 L1079.3 399.0 L1076.5 397.3 L1076.0 395.3 L1074.9 392.9 L1077.9 392.3 L1080.5 394.6 L1084.5 395.3Z" fill="#f7a70a"/><path d="M1110.5 346.3 L1107.5 346.7 L1105.3 346.4 L1103.7 345.5 L1101.6 344.2 L1102.5 343.0 L1104.5 343.1 L1106.5 343.0 L1109.9 344.0Z" fill="#f7a70a"/><path d="M1000.9 358.5 L1000.9 359.8 L1000.4 362.9 L994.8 365.0 L991.2 364.6 L989.2 363.0 L994.0 359.9 L997.2 358.1 L1002.3 355.3Z" fill="#f7a70a"/><path d="M1106.8 433.1 L1102.1 433.7 L1099.7 434.4 L1097.7 432.9 L1094.0 431.6 L1093.0 428.3 L1097.5 427.6 L1100.8 429.2 L1105.0 429.9Z" fill="#f7a70a"/><path d="M1115.9 319.3 L1112.8 321.4 L1109.5 323.8 L1103.7 323.0 L1101.1 320.7 L1097.8 317.7 L1102.4 314.9 L1110.1 313.0 L1118.0 315.1Z" fill="#f7a70a"/><path d="M1081.1 403.7 L1075.5 404.7 L1073.8 406.7 L1070.5 405.7 L1066.2 404.3 L1065.8 400.8 L1070.5 399.8 L1073.8 400.9 L1077.9 400.8Z" fill="#f7a70a"/><path d="M1106.5 398.8 L1099.7 399.9 L1097.0 401.2 L1090.9 401.9 L1084.6 399.6 L1085.1 395.9 L1092.8 395.4 L1098.4 393.0 L1101.3 396.5Z" fill="#f7a70a"/><path d="M1080.6 328.6 L1073.9 328.9 L1071.2 331.0 L1066.1 329.3 L1065.1 326.7 L1066.8 325.3 L1066.4 321.6 L1072.8 323.0 L1077.1 325.4Z" fill="#f7a70a"/><path d="M1009.9 428.6 L1010.4 432.1 L1005.1 432.0 L1000.8 432.0 L997.5 429.5 L996.9 426.0 L1002.5 425.8 L1005.4 425.1 L1010.8 425.2Z" fill="#f7a70a"/><path d="M1105.0 354.7 L1107.9 355.8 L1101.7 358.0 L1096.3 358.7 L1091.8 358.8 L1092.9 357.0 L1093.6 354.9 L1100.7 352.6 L1105.3 353.1Z" fill="#f7a70a"/><path d="M1156.0 308.4 L1152.7 310.9 L1150.5 312.3 L1147.6 313.4 L1144.1 314.0 L1140.9 313.2 L1145.9 310.5 L1149.3 309.3 L1154.5 306.7Z" fill="#f7a70a"/><path d="M1144.3 441.1 L1142.2 443.1 L1140.5 444.9 L1138.3 443.3 L1136.4 442.6 L1135.7 440.7 L1138.1 439.8 L1139.9 438.8 L1142.6 439.0Z" fill="#f7a70a"/><path d="M1145.9 401.2 L1143.9 403.8 L1139.7 404.1 L1132.4 406.9 L1130.2 401.7 L1130.4 397.3 L1134.0 392.9 L1141.7 393.8 L1145.6 397.6Z" fill="#f7a70a"/><path d="M1100.9 317.8 L1098.8 319.7 L1095.5 319.4 L1093.0 318.1 L1091.5 316.1 L1093.3 314.8 L1094.4 313.2 L1098.1 312.2 L1101.0 315.0Z" fill="#f7a70a"/><path d="M1040.8 372.1 L1036.8 374.0 L1034.6 376.8 L1030.0 375.0 L1022.0 376.1 L1023.1 373.5 L1028.1 371.7 L1032.9 370.9 L1040.0 369.7Z" fill="#f7a70a"/><path d="M1124.3 334.5 L1122.6 335.5 L1120.2 336.7 L1117.3 335.2 L1116.1 334.0 L1113.5 332.0 L1116.3 330.6 L1121.0 331.0 L1123.9 332.8Z" fill="#f7a70a"/><path d="M1124.5 422.7 L1122.9 424.7 L1121.8 427.0 L1119.6 425.6 L1116.5 425.4 L1117.5 422.6 L1118.4 420.5 L1120.7 419.7 L1123.4 420.2Z" fill="#f7a70a"/><path d="M1098.7 330.7 L1096.0 334.4 L1095.2 338.6 L1090.4 338.1 L1085.0 339.2 L1084.5 335.2 L1087.6 332.1 L1090.6 329.0 L1093.2 331.6Z" fill="#f7a70a"/><path d="M1005.9 385.9 L1004.8 388.3 L1001.2 389.4 L996.9 388.2 L997.8 385.0 L995.2 382.0 L998.7 380.5 L1002.2 382.4 L1003.7 384.0Z" fill="#f7a70a"/><path d="M1080.0 343.0 L1081.0 348.2 L1077.3 348.2 L1073.5 350.0 L1072.8 344.7 L1073.9 341.1 L1075.5 339.1 L1077.4 339.6 L1081.2 338.2Z" fill="#f7a70a"/><path d="M1057.6 404.9 L1054.6 407.5 L1048.3 407.9 L1043.7 407.0 L1040.2 405.7 L1042.2 404.0 L1042.0 401.2 L1048.7 400.8 L1055.5 402.0Z" fill="#f7a70a"/><path d="M1076.1 405.6 L1073.7 409.3 L1068.8 409.2 L1065.8 408.0 L1059.6 407.2 L1060.6 402.7 L1064.8 400.3 L1070.1 398.0 L1072.0 402.9Z" fill="#f7a70a"/><path d="M1125.9 372.7 L1127.6 374.1 L1125.2 375.8 L1123.1 375.6 L1120.8 376.3 L1118.5 375.2 L1120.1 372.6 L1123.0 371.9 L1125.3 371.3Z" fill="#f7a70a"/><path d="M1064.9 336.4 L1061.6 338.1 L1055.9 339.0 L1049.5 339.2 L1044.3 338.0 L1048.7 336.3 L1049.0 334.3 L1056.1 333.8 L1060.1 335.2Z" fill="#f7a70a"/><path d="M1018.1 376.1 L1017.7 381.1 L1013.4 383.9 L1009.1 382.7 L1003.3 382.8 L1005.6 377.7 L1004.7 372.4 L1010.1 369.9 L1014.6 372.9Z" fill="#f7a70a"/><path d="M998.5 341.8 L998.5 344.1 L995.4 343.9 L993.2 345.5 L992.8 343.2 L990.8 341.8 L993.7 341.1 L995.0 339.9 L998.1 339.4Z" fill="#f7a70a"/><path d="M1155.5 310.5 L1154.5 313.9 L1152.5 316.3 L1149.2 317.8 L1147.3 314.6 L1146.4 312.2 L1144.2 306.9 L1149.3 305.3 L1153.6 307.0Z" fill="#f7a70a"/></g><path d="M1033.3 345.0 L1035.1 347.6 L1030.8 347.7 L1027.9 347.2 L1024.9 346.1 L1023.9 343.7 L1027.8 342.7 L1030.9 342.0 L1032.6 343.7Z" fill="#e9eac4"/><path d="M1005.9 380.0 L1005.9 382.5 L1001.4 383.9 L997.3 382.3 L992.9 381.3 L992.4 378.6 L997.4 377.8 L1001.3 376.3 L1003.9 378.4Z" fill="#e9eac4"/><path d="M1050.3 365.0 L1048.9 367.5 L1045.9 368.9 L1043.1 367.4 L1040.8 366.2 L1040.7 363.8 L1042.9 362.3 L1045.5 363.0 L1048.4 362.8Z" fill="#e9eac4"/><path d="M1023.6 372.0 L1022.5 373.4 L1020.7 374.5 L1018.0 374.3 L1016.9 372.8 L1017.5 371.4 L1018.5 370.3 L1020.4 370.5 L1021.9 371.0Z" fill="#e9eac4"/><path d="M960 384 Q990 391 1030 390 Q1070 386 1095 381 Q1120 378 1140 381 Q1160 386 1174 392" fill="none" stroke="#1a87a6" stroke-width="4.5"/><path d="M962 400 Q985 412 1010 415 Q1050 414 1090 410 Q1125 406 1150 397 Q1162 393 1174 402" fill="none" stroke="#1a87a6" stroke-width="4.5"/><path d="M1040 326 Q1060 315 1090 312 Q1120 300 1150 306" fill="none" stroke="#5aa2cc" stroke-width="1"/><text x="793" y="194" font-family="Liberation Serif" font-weight="bold" font-size="47" fill="#6b6b6b" filter="url(#halo)" letter-spacing="-.3">NETHERLANDS</text><text x="1047" y="228" font-family="Liberation Serif" font-style="italic" font-size="25" fill="#52a7d8" letter-spacing="1">Waddenzee</text><text x="1162" y="183" font-family="Liberation Sans" font-style="italic" font-size="28" fill="#000">F</text><text x="884" y="272" font-family="Liberation Serif" font-weight="bold" font-size="40" fill="#333" letter-spacing="0.3">NETHERLANDS</text><text x="935" y="315" font-family="Liberation Sans" font-weight="bold" font-size="22.5" fill="#000" filter="url(#haloY)" letter-spacing=".4">Amsterdam</text><text x="1066" y="315" font-family="Liberation Sans" font-weight="bold" font-size="22.5" fill="#000" letter-spacing=".4">Amsterdam</text><text x="909" y="351" font-family="Liberation Sans" font-size="22.5" fill="#000">The Hague</text><text x="1086" y="356" font-family="Liberation Sans" font-size="20" fill="#444" text-decoration="underline" filter="url(#halo)" letter-spacing="1">Utrecht</text><text x="609" y="285" font-family="Liberation Sans" font-size="19.5" fill="#3a3a3a" filter="url(#halo)" letter-spacing=".5">Norwich</text><text x="450" y="369" font-family="Liberation Sans" font-style="italic" font-size="37.5" fill="#000" letter-spacing="1.2">BRITISH ISLES</text><text x="462" y="443" font-family="Liberation Serif" font-weight="bold" font-size="40" fill="#333">FLEMISH REGION</text><text x="1025" y="373" font-family="Liberation Serif" font-style="italic" font-size="26" fill="#1a87a6">Lek</text><text x="960" y="382" font-family="Liberation Serif" font-style="italic" font-size="24" fill="#1a87a6" transform="rotate(25 960 382)">Waal</text><text x="1065" y="400" font-family="Liberation Serif" font-style="italic" font-size="24" fill="#1a87a6" transform="rotate(8 1065 400)">Maas</text><path d="M1072 320 l3.2 9.6 h10.1 l-8.2 6 l3.1 9.6 l-8.2 -5.9 l-8.2 5.9 l3.1 -9.6 l-8.2 -6 h10.1z" fill="#000"/><path d="M988 357 l3.2 9.6 h10.1 l-8.2 6 l3.1 9.6 l-8.2 -5.9 l-8.2 5.9 l3.1 -9.6 l-8.2 -6 h10.1z" fill="#000"/><rect x="450" y="1140" width="724" height="135" fill="#d3dcc2"/><g filter="url(#blur2)" opacity=".85"><ellipse cx="684" cy="1165" rx="12" ry="4" fill="#e2e5c6"/><ellipse cx="518" cy="1221" rx="15" ry="5" fill="#aebda6"/><ellipse cx="764" cy="1154" rx="6" ry="7" fill="#e2e5c6"/><ellipse cx="540" cy="1174" rx="12" ry="10" fill="#e2e5c6"/><ellipse cx="874" cy="1151" rx="7" ry="7" fill="#bccab2"/><ellipse cx="660" cy="1164" rx="6" ry="6" fill="#c9d6c4"/><ellipse cx="581" cy="1221" rx="12" ry="6" fill="#e2e5c6"/><ellipse cx="966" cy="1218" rx="12" ry="7" fill="#e2e5c6"/><ellipse cx="760" cy="1186" rx="11" ry="7" fill="#e9ead0"/><ellipse cx="630" cy="1168" rx="14" ry="4" fill="#e9ead0"/><ellipse cx="830" cy="1259" rx="13" ry="6" fill="#aebda6"/><ellipse cx="535" cy="1199" rx="13" ry="5" fill="#a4b49c"/><ellipse cx="755" cy="1270" rx="6" ry="7" fill="#e9ead0"/><ellipse cx="696" cy="1191" rx="10" ry="9" fill="#aebda6"/><ellipse cx="1058" cy="1268" rx="10" ry="8" fill="#aebda6"/><ellipse cx="979" cy="1185" rx="11" ry="8" fill="#a4b49c"/><ellipse cx="656" cy="1195" rx="12" ry="4" fill="#a4b49c"/><ellipse cx="707" cy="1224" rx="10" ry="5" fill="#e9ead0"/><ellipse cx="544" cy="1177" rx="9" ry="9" fill="#aebda6"/><ellipse cx="570" cy="1197" rx="8" ry="5" fill="#a4b49c"/><ellipse cx="1076" cy="1181" rx="10" ry="6" fill="#a4b49c"/><ellipse cx="1143" cy="1165" rx="7" ry="5" fill="#bccab2"/><ellipse cx="459" cy="1253" rx="7" ry="6" fill="#bccab2"/><ellipse cx="753" cy="1193" rx="11" ry="10" fill="#c9d6c4"/><ellipse cx="1072" cy="1269" rx="12" ry="8" fill="#a4b49c"/><ellipse cx="1101" cy="1246" rx="15" ry="9" fill="#a4b49c"/><ellipse cx="738" cy="1196" rx="10" ry="6" fill="#bccab2"/><ellipse cx="499" cy="1172" rx="7" ry="6" fill="#aebda6"/><ellipse cx="524" cy="1219" rx="11" ry="10" fill="#e2e5c6"/><ellipse cx="468" cy="1259" rx="12" ry="5" fill="#e9ead0"/><ellipse cx="1142" cy="1223" rx="10" ry="5" fill="#a4b49c"/><ellipse cx="1169" cy="1206" rx="10" ry="5" fill="#aebda6"/><ellipse cx="993" cy="1241" rx="10" ry="8" fill="#e2e5c6"/><ellipse cx="467" cy="1269" rx="11" ry="5" fill="#e2e5c6"/><ellipse cx="1112" cy="1244" rx="8" ry="8" fill="#aebda6"/><ellipse cx="954" cy="1179" rx="9" ry="5" fill="#bccab2"/><ellipse cx="836" cy="1246" rx="9" ry="5" fill="#bccab2"/><ellipse cx="1034" cy="1251" rx="13" ry="5" fill="#e2e5c6"/><ellipse cx="807" cy="1240" rx="16" ry="9" fill="#a4b49c"/><ellipse cx="638" cy="1235" rx="16" ry="7" fill="#c9d6c4"/><ellipse cx="1165" cy="1269" rx="9" ry="5" fill="#bccab2"/><ellipse cx="790" cy="1189" rx="10" ry="10" fill="#e2e5c6"/><ellipse cx="1058" cy="1207" rx="12" ry="9" fill="#aebda6"/><ellipse cx="1054" cy="1161" rx="9" ry="8" fill="#bccab2"/><ellipse cx="796" cy="1168" rx="14" ry="6" fill="#c9d6c4"/><ellipse cx="737" cy="1197" rx="15" ry="8" fill="#bccab2"/><ellipse cx="1169" cy="1149" rx="11" ry="7" fill="#c9d6c4"/><ellipse cx="556" cy="1252" rx="16" ry="8" fill="#e9ead0"/><ellipse cx="563" cy="1216" rx="5" ry="9" fill="#c9d6c4"/><ellipse cx="920" cy="1213" rx="15" ry="7" fill="#bccab2"/><ellipse cx="1048" cy="1172" rx="8" ry="6" fill="#bccab2"/><ellipse cx="1003" cy="1187" rx="11" ry="9" fill="#aebda6"/><ellipse cx="1109" cy="1191" rx="10" ry="8" fill="#e2e5c6"/><ellipse cx="755" cy="1264" rx="11" ry="7" fill="#e2e5c6"/><ellipse cx="820" cy="1258" rx="14" ry="8" fill="#bccab2"/><ellipse cx="575" cy="1207" rx="13" ry="7" fill="#e9ead0"/><ellipse cx="944" cy="1214" rx="10" ry="9" fill="#e2e5c6"/><ellipse cx="491" cy="1170" rx="5" ry="5" fill="#a4b49c"/><ellipse cx="857" cy="1244" rx="15" ry="7" fill="#e2e5c6"/><ellipse cx="1155" cy="1224" rx="7" ry="6" fill="#e2e5c6"/><ellipse cx="836" cy="1207" rx="15" ry="8" fill="#e9ead0"/><ellipse cx="1118" cy="1261" rx="7" ry="7" fill="#a4b49c"/><ellipse cx="538" cy="1202" rx="6" ry="5" fill="#aebda6"/><ellipse cx="604" cy="1184" rx="6" ry="9" fill="#c9d6c4"/><ellipse cx="916" cy="1193" rx="8" ry="5" fill="#a4b49c"/><ellipse cx="609" cy="1269" rx="9" ry="7" fill="#c9d6c4"/><ellipse cx="1053" cy="1166" rx="10" ry="7" fill="#e9ead0"/><ellipse cx="755" cy="1191" rx="6" ry="6" fill="#e9ead0"/><ellipse cx="851" cy="1202" rx="5" ry="6" fill="#e2e5c6"/><ellipse cx="664" cy="1270" rx="6" ry="10" fill="#bccab2"/><ellipse cx="1154" cy="1159" rx="8" ry="4" fill="#bccab2"/><ellipse cx="646" cy="1162" rx="10" ry="9" fill="#e9ead0"/><ellipse cx="744" cy="1215" rx="11" ry="7" fill="#e9ead0"/><ellipse cx="515" cy="1152" rx="13" ry="7" fill="#aebda6"/><ellipse cx="645" cy="1147" rx="6" ry="6" fill="#e2e5c6"/><ellipse cx="1070" cy="1154" rx="14" ry="7" fill="#e9ead0"/><ellipse cx="1170" cy="1199" rx="15" ry="8" fill="#aebda6"/><ellipse cx="831" cy="1176" rx="6" ry="5" fill="#aebda6"/><ellipse cx="581" cy="1266" rx="12" ry="7" fill="#bccab2"/><ellipse cx="660" cy="1210" rx="7" ry="6" fill="#aebda6"/><ellipse cx="1170" cy="1150" rx="5" ry="7" fill="#bccab2"/><ellipse cx="822" cy="1177" rx="10" ry="8" fill="#c9d6c4"/><ellipse cx="763" cy="1209" rx="14" ry="6" fill="#e2e5c6"/><ellipse cx="673" cy="1173" rx="8" ry="5" fill="#c9d6c4"/><ellipse cx="978" cy="1163" rx="16" ry="10" fill="#bccab2"/><ellipse cx="460" cy="1226" rx="15" ry="7" fill="#aebda6"/><ellipse cx="511" cy="1254" rx="15" ry="8" fill="#e9ead0"/><ellipse cx="884" cy="1235" rx="5" ry="5" fill="#e9ead0"/><ellipse cx="773" cy="1179" rx="16" ry="10" fill="#e2e5c6"/><ellipse cx="684" cy="1149" rx="15" ry="5" fill="#bccab2"/><ellipse cx="451" cy="1195" rx="10" ry="7" fill="#bccab2"/><ellipse cx="630" cy="1246" rx="6" ry="9" fill="#bccab2"/><ellipse cx="739" cy="1150" rx="5" ry="6" fill="#bccab2"/><ellipse cx="511" cy="1269" rx="14" ry="5" fill="#c9d6c4"/><ellipse cx="1018" cy="1223" rx="13" ry="8" fill="#a4b49c"/><ellipse cx="558" cy="1239" rx="12" ry="4" fill="#c9d6c4"/><ellipse cx="1096" cy="1227" rx="13" ry="9" fill="#bccab2"/><ellipse cx="1109" cy="1243" rx="11" ry="9" fill="#aebda6"/><ellipse cx="1048" cy="1221" rx="15" ry="8" fill="#c9d6c4"/><ellipse cx="915" cy="1156" rx="5" ry="8" fill="#aebda6"/><ellipse cx="723" cy="1204" rx="6" ry="4" fill="#e2e5c6"/><ellipse cx="943" cy="1209" rx="5" ry="9" fill="#c9d6c4"/><ellipse cx="1125" cy="1262" rx="6" ry="7" fill="#c9d6c4"/><ellipse cx="983" cy="1178" rx="6" ry="6" fill="#c9d6c4"/><ellipse cx="998" cy="1175" rx="12" ry="7" fill="#a4b49c"/><ellipse cx="506" cy="1263" rx="8" ry="4" fill="#c9d6c4"/><ellipse cx="915" cy="1155" rx="7" ry="6" fill="#c9d6c4"/><ellipse cx="952" cy="1226" rx="6" ry="7" fill="#a4b49c"/><ellipse cx="645" cy="1232" rx="13" ry="8" fill="#e9ead0"/><ellipse cx="963" cy="1182" rx="10" ry="9" fill="#e2e5c6"/><ellipse cx="594" cy="1272" rx="15" ry="4" fill="#a4b49c"/><ellipse cx="505" cy="1211" rx="16" ry="10" fill="#a4b49c"/><ellipse cx="602" cy="1268" rx="7" ry="7" fill="#bccab2"/><ellipse cx="991" cy="1179" rx="9" ry="8" fill="#c9d6c4"/><ellipse cx="818" cy="1260" rx="13" ry="5" fill="#a4b49c"/><ellipse cx="735" cy="1166" rx="15" ry="8" fill="#a4b49c"/><ellipse cx="669" cy="1163" rx="9" ry="6" fill="#e9ead0"/><ellipse cx="451" cy="1243" rx="14" ry="5" fill="#bccab2"/><ellipse cx="966" cy="1262" rx="8" ry="6" fill="#a4b49c"/><ellipse cx="732" cy="1258" rx="6" ry="10" fill="#e9ead0"/><ellipse cx="1068" cy="1181" rx="6" ry="8" fill="#c9d6c4"/><ellipse cx="1127" cy="1177" rx="8" ry="7" fill="#bccab2"/><ellipse cx="1010" cy="1247" rx="10" ry="4" fill="#c9d6c4"/><ellipse cx="740" cy="1259" rx="11" ry="5" fill="#aebda6"/><ellipse cx="486" cy="1240" rx="10" ry="9" fill="#c9d6c4"/><ellipse cx="1080" cy="1208" rx="15" ry="7" fill="#bccab2"/><ellipse cx="792" cy="1190" rx="8" ry="8" fill="#c9d6c4"/><ellipse cx="638" cy="1230" rx="8" ry="7" fill="#a4b49c"/><ellipse cx="537" cy="1229" rx="6" ry="7" fill="#a4b49c"/><ellipse cx="848" cy="1204" rx="9" ry="9" fill="#a4b49c"/><ellipse cx="551" cy="1170" rx="6" ry="6" fill="#aebda6"/><ellipse cx="681" cy="1193" rx="14" ry="5" fill="#aebda6"/><ellipse cx="993" cy="1199" rx="10" ry="7" fill="#a4b49c"/><ellipse cx="646" cy="1243" rx="10" ry="7" fill="#e9ead0"/><ellipse cx="541" cy="1210" rx="12" ry="9" fill="#bccab2"/><ellipse cx="517" cy="1262" rx="9" ry="8" fill="#a4b49c"/><ellipse cx="1141" cy="1255" rx="15" ry="4" fill="#aebda6"/><ellipse cx="758" cy="1244" rx="14" ry="10" fill="#a4b49c"/><ellipse cx="450" cy="1196" rx="15" ry="9" fill="#a4b49c"/><ellipse cx="1154" cy="1177" rx="6" ry="5" fill="#e2e5c6"/><ellipse cx="1154" cy="1159" rx="14" ry="8" fill="#a4b49c"/><ellipse cx="512" cy="1246" rx="5" ry="5" fill="#e2e5c6"/><ellipse cx="1116" cy="1229" rx="8" ry="5" fill="#e9ead0"/><ellipse cx="832" cy="1202" rx="13" ry="5" fill="#e9ead0"/><ellipse cx="830" cy="1221" rx="9" ry="5" fill="#e2e5c6"/><ellipse cx="451" cy="1215" rx="16" ry="6" fill="#e9ead0"/><ellipse cx="917" cy="1260" rx="10" ry="5" fill="#bccab2"/><ellipse cx="471" cy="1199" rx="12" ry="4" fill="#bccab2"/><ellipse cx="811" cy="1233" rx="10" ry="6" fill="#c9d6c4"/><ellipse cx="757" cy="1193" rx="10" ry="8" fill="#c9d6c4"/><ellipse cx="754" cy="1234" rx="7" ry="9" fill="#c9d6c4"/><ellipse cx="1062" cy="1154" rx="10" ry="5" fill="#bccab2"/><ellipse cx="617" cy="1174" rx="13" ry="6" fill="#e2e5c6"/><ellipse cx="809" cy="1169" rx="7" ry="7" fill="#c9d6c4"/><ellipse cx="491" cy="1222" rx="15" ry="4" fill="#aebda6"/><ellipse cx="1155" cy="1163" rx="6" ry="4" fill="#a4b49c"/><ellipse cx="776" cy="1238" rx="8" ry="5" fill="#aebda6"/><ellipse cx="1124" cy="1188" rx="7" ry="10" fill="#c9d6c4"/><ellipse cx="789" cy="1186" rx="13" ry="9" fill="#e9ead0"/><ellipse cx="770" cy="1159" rx="6" ry="4" fill="#a4b49c"/><ellipse cx="1142" cy="1161" rx="16" ry="5" fill="#e9ead0"/><ellipse cx="1007" cy="1185" rx="14" ry="5" fill="#c9d6c4"/><ellipse cx="793" cy="1193" rx="15" ry="5" fill="#e9ead0"/><ellipse cx="984" cy="1207" rx="12" ry="5" fill="#c9d6c4"/><ellipse cx="1005" cy="1150" rx="5" ry="4" fill="#aebda6"/><ellipse cx="636" cy="1242" rx="15" ry="6" fill="#e9ead0"/><ellipse cx="693" cy="1269" rx="5" ry="8" fill="#c9d6c4"/><ellipse cx="679" cy="1181" rx="5" ry="9" fill="#c9d6c4"/><ellipse cx="1135" cy="1153" rx="14" ry="5" fill="#c9d6c4"/><ellipse cx="1143" cy="1269" rx="9" ry="6" fill="#a4b49c"/><ellipse cx="1040" cy="1162" rx="10" ry="4" fill="#c9d6c4"/><ellipse cx="670" cy="1235" rx="7" ry="5" fill="#e9ead0"/><ellipse cx="784" cy="1247" rx="12" ry="7" fill="#a4b49c"/><ellipse cx="995" cy="1177" rx="6" ry="4" fill="#e2e5c6"/><ellipse cx="844" cy="1166" rx="10" ry="5" fill="#aebda6"/><ellipse cx="642" cy="1156" rx="6" ry="7" fill="#c9d6c4"/><ellipse cx="1154" cy="1168" rx="6" ry="7" fill="#c9d6c4"/><ellipse cx="620" cy="1215" rx="14" ry="9" fill="#e9ead0"/><ellipse cx="663" cy="1219" rx="9" ry="8" fill="#bccab2"/><ellipse cx="768" cy="1169" rx="8" ry="6" fill="#e2e5c6"/><ellipse cx="586" cy="1153" rx="8" ry="5" fill="#e2e5c6"/><ellipse cx="618" cy="1250" rx="12" ry="10" fill="#aebda6"/><ellipse cx="453" cy="1260" rx="8" ry="7" fill="#e9ead0"/><ellipse cx="479" cy="1183" rx="6" ry="5" fill="#e2e5c6"/><ellipse cx="591" cy="1155" rx="11" ry="5" fill="#e2e5c6"/><ellipse cx="638" cy="1246" rx="15" ry="5" fill="#e2e5c6"/><ellipse cx="964" cy="1190" rx="5" ry="6" fill="#aebda6"/><ellipse cx="598" cy="1178" rx="12" ry="8" fill="#bccab2"/><ellipse cx="1040" cy="1251" rx="9" ry="6" fill="#e2e5c6"/><ellipse cx="676" cy="1171" rx="14" ry="7" fill="#aebda6"/><ellipse cx="746" cy="1248" rx="12" ry="5" fill="#e2e5c6"/><ellipse cx="516" cy="1166" rx="13" ry="6" fill="#e9ead0"/><ellipse cx="933" cy="1199" rx="6" ry="8" fill="#e9ead0"/><ellipse cx="750" cy="1147" rx="13" ry="9" fill="#c9d6c4"/><ellipse cx="593" cy="1240" rx="7" ry="4" fill="#bccab2"/><ellipse cx="757" cy="1252" rx="9" ry="9" fill="#a4b49c"/><ellipse cx="1010" cy="1162" rx="6" ry="5" fill="#a4b49c"/><ellipse cx="514" cy="1226" rx="9" ry="7" fill="#bccab2"/><ellipse cx="702" cy="1166" rx="7" ry="4" fill="#a4b49c"/><ellipse cx="805" cy="1250" rx="16" ry="5" fill="#bccab2"/><ellipse cx="1056" cy="1151" rx="15" ry="6" fill="#e2e5c6"/><ellipse cx="1121" cy="1195" rx="15" ry="8" fill="#bccab2"/><ellipse cx="914" cy="1256" rx="12" ry="8" fill="#bccab2"/><ellipse cx="1050" cy="1169" rx="7" ry="6" fill="#e2e5c6"/><ellipse cx="563" cy="1192" rx="7" ry="10" fill="#bccab2"/><ellipse cx="480" cy="1218" rx="13" ry="4" fill="#e9ead0"/><ellipse cx="535" cy="1223" rx="11" ry="8" fill="#e9ead0"/><ellipse cx="920" cy="1185" rx="8" ry="6" fill="#e9ead0"/><ellipse cx="773" cy="1202" rx="5" ry="8" fill="#a4b49c"/><ellipse cx="787" cy="1203" rx="12" ry="9" fill="#bccab2"/><ellipse cx="1037" cy="1197" rx="6" ry="6" fill="#e9ead0"/><ellipse cx="516" cy="1202" rx="11" ry="4" fill="#c9d6c4"/><ellipse cx="544" cy="1265" rx="8" ry="8" fill="#aebda6"/><ellipse cx="489" cy="1211" rx="9" ry="10" fill="#bccab2"/><ellipse cx="469" cy="1154" rx="12" ry="8" fill="#aebda6"/><ellipse cx="590" cy="1273" rx="10" ry="10" fill="#bccab2"/><ellipse cx="947" cy="1239" rx="7" ry="9" fill="#e2e5c6"/><ellipse cx="997" cy="1166" rx="15" ry="6" fill="#a4b49c"/><ellipse cx="554" cy="1210" rx="15" ry="5" fill="#e9ead0"/><ellipse cx="896" cy="1176" rx="9" ry="5" fill="#a4b49c"/></g><path d="M1048 1198 L1062 1196 L1085 1192 L1100 1196 L1108 1205 L1120 1214 L1126 1222 L1110 1222 L1095 1218 L1078 1222 L1068 1230 L1058 1240 L1050 1228 L1044 1215 Z" fill="#f7a70a"/><path d="M856.2 1196.0 L857.4 1205.8 L846.0 1209.3 L836.3 1204.3 L835.2 1196.0 L833.8 1185.5 L846.0 1181.0 L856.0 1187.4Z" fill="#f7a70a"/><path d="M858.0 1222.0 L855.8 1224.8 L853.0 1225.0 L849.8 1225.2 L847.7 1222.0 L850.7 1219.7 L853.0 1215.8 L855.8 1219.2Z" fill="#f7a70a"/><path d="M600.5 1188.0 L598.1 1189.8 L595.0 1193.6 L589.1 1191.4 L585.9 1188.0 L589.6 1184.9 L595.0 1185.5 L599.3 1185.6Z" fill="#f7a70a"/><path d="M1012.0 1240.0 L1005.9 1242.0 L1000.0 1245.4 L992.4 1242.5 L991.3 1240.0 L989.4 1236.5 L1000.0 1237.2 L1011.4 1236.2Z" fill="#f7a70a"/><path d="M1025.7 1232.0 L1023.9 1234.9 L1018.0 1235.5 L1012.4 1234.8 L1012.0 1232.0 L1014.4 1230.2 L1018.0 1226.8 L1022.5 1229.8Z" fill="#f7a70a"/><path d="M991.9 1228.0 L989.2 1230.7 L987.0 1234.9 L983.3 1232.6 L982.2 1228.0 L983.6 1223.7 L987.0 1222.7 L990.3 1223.8Z" fill="#f7a70a"/><path d="M967.2 1160.0 L967.2 1163.5 L963.0 1166.3 L959.8 1162.7 L955.0 1160.0 L957.4 1155.4 L963.0 1155.4 L966.8 1156.8Z" fill="#f7a70a"/><path d="M882.8 1150.0 L881.2 1151.9 L878.0 1154.2 L874.8 1151.9 L874.9 1150.0 L875.6 1148.6 L878.0 1146.5 L882.9 1147.0Z" fill="#f7a70a"/><path d="M1175.0 1262.0 L1173.5 1269.0 L1170.0 1272.4 L1165.8 1270.5 L1166.1 1262.0 L1166.2 1254.3 L1170.0 1251.5 L1173.9 1254.2Z" fill="#f7a70a"/><path d="M1051.0 1166.0 L1050.1 1169.1 L1048.0 1171.3 L1044.2 1171.7 L1044.5 1166.0 L1045.0 1161.4 L1048.0 1160.9 L1049.9 1163.1Z" fill="#f7a70a"/><path d="M1131.6 1162.0 L1132.5 1164.7 L1129.0 1165.7 L1126.5 1163.9 L1124.4 1162.0 L1125.8 1159.6 L1129.0 1158.0 L1132.9 1159.1Z" fill="#f7a70a"/><path d="M454.8 1210.0 L455.0 1214.9 L452.0 1216.8 L449.7 1213.8 L448.1 1210.0 L449.9 1206.5 L452.0 1205.5 L453.7 1207.2Z" fill="#f7a70a"/><path d="M960.9 1218.0 L958.5 1219.0 L957.0 1219.3 L954.4 1219.8 L953.3 1218.0 L954.9 1216.6 L957.0 1215.5 L958.4 1217.1Z" fill="#f7a70a"/><path d="M872.6 1258.0 L872.2 1259.2 L871.0 1259.9 L870.0 1259.0 L869.7 1258.0 L869.8 1256.8 L871.0 1255.4 L873.0 1256.0Z" fill="#f7a70a"/><path d="M1044.8 1205.0 L1042.8 1207.8 L1040.0 1208.2 L1036.1 1208.9 L1035.9 1205.0 L1036.7 1201.7 L1040.0 1202.5 L1042.2 1202.8Z" fill="#f7a70a"/><path d="M1065.1 1250.0 L1063.5 1255.2 L1060.0 1257.8 L1056.9 1254.6 L1056.2 1250.0 L1057.0 1245.5 L1060.0 1242.3 L1062.4 1246.4Z" fill="#f7a70a"/><path d="M517 1149 Q512 1165 513 1177 Q515 1183 530 1182 L565 1183 Q572 1186 577 1193 L590 1193 Q600 1190 610 1182 Q620 1188 630 1194 L650 1199 Q660 1204 670 1206 L689 1206" fill="none" stroke="#1a87a6" stroke-width="2"/><path d="M693 1270 Q708 1266 720 1262 Q730 1255 736 1246 Q745 1244 754 1247 Q757 1236 759 1223 Q765 1218 773 1217 L789 1220" fill="none" stroke="#1a87a6" stroke-width="2"/><path d="M965 1149 Q955 1162 960 1172 Q972 1190 978 1205 Q985 1222 985 1240 Q984 1258 970 1272" fill="none" stroke="#1a87a6" stroke-width="2"/><path d="M1054 1149 Q1056 1165 1063 1175 Q1068 1190 1064 1202 Q1060 1215 1062 1228 Q1056 1240 1056 1255 L1058 1272" fill="none" stroke="#1a87a6" stroke-width="3.5"/><path d="M1120 1192 Q1140 1185 1155 1195 Q1165 1210 1174 1212" fill="none" stroke="#1a87a6" stroke-width="4"/><text x="596" y="1179" font-family="Liberation Sans" font-size="25.5" fill="#111">Limoges</text><text x="806" y="1186" font-family="Liberation Sans" font-style="italic" font-size="22.5" fill="#111">Puy de Sancy</text><text x="808" y="1212" font-family="Liberation Sans" font-style="italic" font-size="22.5" fill="#111">1885 m</text><text x="995" y="1192" font-family="Liberation Sans" font-weight="bold" font-size="22" fill="#111" text-decoration="underline" filter="url(#halo)">Lyon</text><text x="1067" y="1187" font-family="Liberation Sans" font-weight="bold" font-size="23" fill="#111">Lyon</text><rect x="1066" y="1190" width="56" height="2.5" fill="#111"/><text x="1148" y="1184" font-family="Liberation Sans" font-weight="bold" font-size="22" fill="#111" filter="url(#halo)">Ge</text><text x="1148" y="1218" font-family="Liberation Serif" font-weight="bold" font-size="34" fill="#333">S</text><text x="640" y="1269" font-family="Liberation Sans" font-size="22" fill="#333" filter="url(#halo)">Brive</text><text x="920" y="1280" font-family="Liberation Sans" font-size="20" fill="#333" filter="url(#halo)" letter-spacing=".6">Saint Étienne</text><text x="500" y="1185" font-family="Liberation Serif" font-style="italic" font-size="24" fill="#1a87a6" transform="rotate(-80 500 1185)">Vie</text><text x="1070" y="1232" font-family="Liberation Serif" font-style="italic" font-size="26" fill="#1a87a6" transform="rotate(72 1070 1232)">Rhône</text><path d="M796 1221 l-9 16 h18z" fill="#000"/><circle cx="1062" cy="1197" r="4" fill="#000"/></svg>
<div class="a" style="left:448px;top:122px;width:2px;height:1150px;background:#000"></div>
<div class="a" style="left:450px;top:1272px;width:725px;height:1px;background:#f0eff0"></div>
<div class="a" style="left:1192px;top:99px;width:5px;height:1191px;background:#f0eff0"></div>
<div class="a" style="left:1197px;top:99px;width:482px;height:20px;background:#c9d9e9"></div>
<div class="t" style="left:1201px;top:104.12px;font-size:11.7px;">ArcToolbox</div>
<svg style="left:1650px;top:103px" width="9" height="11" viewBox="0 0 9 11"><path d="M2 1.5h4.5v5h-4.5z" fill="none" stroke="#000" stroke-width="1.3"/><rect x="4.6" y="1" width="2.4" height="5.5" fill="#000"/><path d="M0.5 6.8h8" stroke="#000" stroke-width="1.3"/><path d="M4.3 7v3.8" stroke="#000" stroke-width="1.3"/></svg>
<svg style="left:1666px;top:105px" width="9" height="8" viewBox="0 0 9 8"><path d="M0.8 0.5L8.2 7.5M8.2 0.5L0.8 7.5" stroke="#000" stroke-width="1.8"/></svg>
<div class="a" style="left:1197px;top:119px;width:482px;height:1171px;background:#fff;border-top:1px solid #8a8a8a;border-left:1px solid #8a8a8a;border-bottom:1px solid #8a8a8a"></div>
<svg style="left:1203px;top:122px" width="16" height="16" viewBox="0 0 16 16"><path d="M0.5 1.5h5l1 1.5h8v10h-14z" fill="#f4dd8a" stroke="#a8822a"/><path d="M1.5 4.5h13" stroke="#fff3c0"/><path d="M2 7L8 5L14 7L8 9Z" fill="#d0564a"/><path d="M2 7L8 9V15L2 13Z" fill="#b8392d"/><path d="M8 9L14 7V13L8 15Z" fill="#8e2820"/><path d="M2 7L8 9L14 7M8 9V15" fill="none" stroke="#f2a597" stroke-width=".6"/></svg>
<div class="t" style="left:1222px;top:124.12px;font-size:11.7px;">ArcToolbox</div>
<svg style="left:1206px;top:145px" width="9" height="9" viewBox="0 0 9 9"><rect x="0.5" y="0.5" width="8" height="8" fill="#f4f4f4" stroke="#9aa0a8"/><path d="M2 4.5h5" stroke="#2b3f8a"/><path d="M4.5 2v5" stroke="#2b3f8a"/></svg>
<svg style="left:1221px;top:140px" width="17" height="16" viewBox="0 0 17 16"><path d="M1 6L8 3L16 6L9 9Z" fill="#d0564a"/><path d="M1 6L9 9V15.5L1 12.5Z" fill="#b8392d"/><path d="M9 9L16 6V12.5L9 15.5Z" fill="#8e2820"/><path d="M1 6L9 9L16 6M9 9V15.5M3 8.5l5 2" fill="none" stroke="#f2a597" stroke-width=".7"/><path d="M5 4.6L9.5 2.6L12.5 3.8" fill="none" stroke="#2a2a2a" stroke-width="1.4"/><rect x="4.3" y="9" width="1.4" height="2.2" fill="#222"/><rect x="4.5" y="8" width="1" height="1" fill="#ddd"/></svg>
<div class="t" style="left:1242px;top:142.12px;font-size:11.7px;">3D Analyst Tools</div>
<svg style="left:1206px;top:163px" width="9" height="9" viewBox="0 0 9 9"><rect x="0.5" y="0.5" width="8" height="8" fill="#f4f4f4" stroke="#9aa0a8"/><path d="M2 4.5h5" stroke="#2b3f8a"/><path d="M4.5 2v5" stroke="#2b3f8a"/></svg>
<svg style="left:1221px;top:158px" width="17" height="16" viewBox="0 0 17 16"><path d="M1 6L8 3L16 6L9 9Z" fill="#d0564a"/><path d="M1 6L9 9V15.5L1 12.5Z" fill="#b8392d"/><path d="M9 9L16 6V12.5L9 15.5Z" fill="#8e2820"/><path d="M1 6L9 9L16 6M9 9V15.5M3 8.5l5 2" fill="none" stroke="#f2a597" stroke-width=".7"/><path d="M5 4.6L9.5 2.6L12.5 3.8" fill="none" stroke="#2a2a2a" stroke-width="1.4"/><rect x="4.3" y="9" width="1.4" height="2.2" fill="#222"/><rect x="4.5" y="8" width="1" height="1" fill="#ddd"/></svg>
<div class="t" style="left:1242px;top:160.12px;font-size:11.7px;">Analysis Tools</div>
<svg style="left:1206px;top:181px" width="9" height="9" viewBox="0 0 9 9"><rect x="0.5" y="0.5" width="8" height="8" fill="#f4f4f4" stroke="#9aa0a8"/><path d="M2 4.5h5" stroke="#2b3f8a"/><path d="M4.5 2v5" stroke="#2b3f8a"/></svg>
<svg style="left:1221px;top:176px" width="17" height="16" viewBox="0 0 17 16"><path d="M1 6L8 3L16 6L9 9Z" fill="#d0564a"/><path d="M1 6L9 9V15.5L1 12.5Z" fill="#b8392d"/><path d="M9 9L16 6V12.5L9 15.5Z" fill="#8e2820"/><path d="M1 6L9 9L16 6M9 9V15.5M3 8.5l5 2" fill="none" stroke="#f2a597" stroke-width=".7"/><path d="M5 4.6L9.5 2.6L12.5 3.8" fill="none" stroke="#2a2a2a" stroke-width="1.4"/><rect x="4.3" y="9" width="1.4" height="2.2" fill="#222"/><rect x="4.5" y="8" width="1" height="1" fill="#ddd"/></svg>
<div class="t" style="left:1242px;top:178.12px;font-size:11.7px;">Cartography Tools</div>
<svg style="left:1206px;top:199px" width="9" height="9" viewBox="0 0 9 9"><rect x="0.5" y="0.5" width="8" height="8" fill="#f4f4f4" stroke="#9aa0a8"/><path d="M2 4.5h5" stroke="#2b3f8a"/><path d="M4.5 2v5" stroke="#2b3f8a"/></svg>
<svg style="left:1221px;top:194px" width="17" height="16" viewBox="0 0 17 16"><path d="M1 6L8 3L16 6L9 9Z" fill="#d0564a"/><path d="M1 6L9 9V15.5L1 12.5Z" fill="#b8392d"/><path d="M9 9L16 6V12.5L9 15.5Z" fill="#8e2820"/><path d="M1 6L9 9L16 6M9 9V15.5M3 8.5l5 2" fill="none" stroke="#f2a597" stroke-width=".7"/><path d="M5 4.6L9.5 2.6L12.5 3.8" fill="none" stroke="#2a2a2a" stroke-width="1.4"/><rect x="4.3" y="9" width="1.4" height="2.2" fill="#222"/><rect x="4.5" y="8" width="1" height="1" fill="#ddd"/></svg>
<div class="t" style="left:1242px;top:196.12px;font-size:11.7px;">Conversion Tools</div>
<svg style="left:1206px;top:217px" width="9" height="9" viewBox="0 0 9 9"><rect x="0.5" y="0.5" width="8" height="8" fill="#f4f4f4" stroke="#9aa0a8"/><path d="M2 4.5h5" stroke="#2b3f8a"/><path d="M4.5 2v5" stroke="#2b3f8a"/></svg>
<svg style="left:1221px;top:212px" width="17" height="16" viewBox="0 0 17 16"><path d="M1 6L8 3L16 6L9 9Z" fill="#d0564a"/><path d="M1 6L9 9V15.5L1 12.5Z" fill="#b8392d"/><path d="M9 9L16 6V12.5L9 15.5Z" fill="#8e2820"/><path d="M1 6L9 9L16 6M9 9V15.5M3 8.5l5 2" fill="none" stroke="#f2a597" stroke-width=".7"/><path d="M5 4.6L9.5 2.6L12.5 3.8" fill="none" stroke="#2a2a2a" stroke-width="1.4"/><rect x="4.3" y="9" width="1.4" height="2.2" fill="#222"/><rect x="4.5" y="8" width="1" height="1" fill="#ddd"/></svg>
<div class="t" style="left:1242px;top:214.12px;font-size:11.7px;">Data Interoperability Tools</div>
<svg style="left:1206px;top:235px" width="9" height="9" viewBox="0 0 9 9"><rect x="0.5" y="0.5" width="8" height="8" fill="#f4f4f4" stroke="#9aa0a8"/><path d="M2 4.5h5" stroke="#2b3f8a"/><path d="M4.5 2v5" stroke="#2b3f8a"/></svg>
<svg style="left:1221px;top:230px" width="17" height="16" viewBox="0 0 17 16"><path d="M1 6L8 3L16 6L9 9Z" fill="#d0564a"/><path d="M1 6L9 9V15.5L1 12.5Z" fill="#b8392d"/><path d="M9 9L16 6V12.5L9 15.5Z" fill="#8e2820"/><path d="M1 6L9 9L16 6M9 9V15.5M3 8.5l5 2" fill="none" stroke="#f2a597" stroke-width=".7"/><path d="M5 4.6L9.5 2.6L12.5 3.8" fill="none" stroke="#2a2a2a" stroke-width="1.4"/><rect x="4.3" y="9" width="1.4" height="2.2" fill="#222"/><rect x="4.5" y="8" width="1" height="1" fill="#ddd"/></svg>
<div class="t" style="left:1242px;top:232.12px;font-size:11.7px;">Data Management Tools</div>
<svg style="left:1206px;top:253px" width="9" height="9" viewBox="0 0 9 9"><rect x="0.5" y="0.5" width="8" height="8" fill="#f4f4f4" stroke="#9aa0a8"/><path d="M2 4.5h5" stroke="#2b3f8a"/><path d="M4.5 2v5" stroke="#2b3f8a"/></svg>
<svg style="left:1221px;top:248px" width="17" height="16" viewBox="0 0 17 16"><path d="M1 6L8 3L16 6L9 9Z" fill="#d0564a"/><path d="M1 6L9 9V15.5L1 12.5Z" fill="#b8392d"/><path d="M9 9L16 6V12.5L9 15.5Z" fill="#8e2820"/><path d="M1 6L9 9L16 6M9 9V15.5M3 8.5l5 2" fill="none" stroke="#f2a597" stroke-width=".7"/><path d="M5 4.6L9.5 2.6L12.5 3.8" fill="none" stroke="#2a2a2a" stroke-width="1.4"/><rect x="4.3" y="9" width="1.4" height="2.2" fill="#222"/><rect x="4.5" y="8" width="1" height="1" fill="#ddd"/></svg>
<div class="t" style="left:1242px;top:250.12px;font-size:11.7px;">Geocoding Tools</div>
<svg style="left:1206px;top:271px" width="9" height="9" viewBox="0 0 9 9"><rect x="0.5" y="0.5" width="8" height="8" fill="#f4f4f4" stroke="#9aa0a8"/><path d="M2 4.5h5" stroke="#2b3f8a"/><path d="M4.5 2v5" stroke="#2b3f8a"/></svg>
<svg style="left:1221px;top:266px" width="17" height="16" viewBox="0 0 17 16"><path d="M1 6L8 3L16 6L9 9Z" fill="#d0564a"/><path d="M1 6L9 9V15.5L1 12.5Z" fill="#b8392d"/><path d="M9 9L16 6V12.5L9 15.5Z" fill="#8e2820"/><path d="M1 6L9 9L16 6M9 9V15.5M3 8.5l5 2" fill="none" stroke="#f2a597" stroke-width=".7"/><path d="M5 4.6L9.5 2.6L12.5 3.8" fill="none" stroke="#2a2a2a" stroke-width="1.4"/><rect x="4.3" y="9" width="1.4" height="2.2" fill="#222"/><rect x="4.5" y="8" width="1" height="1" fill="#ddd"/></svg>
<div class="t" style="left:1242px;top:268.12px;font-size:11.7px;">Geostatistical Analyst Tools</div>
<svg style="left:1206px;top:289px" width="9" height="9" viewBox="0 0 9 9"><rect x="0.5" y="0.5" width="8" height="8" fill="#f4f4f4" stroke="#9aa0a8"/><path d="M2 4.5h5" stroke="#2b3f8a"/><path d="M4.5 2v5" stroke="#2b3f8a"/></svg>
<svg style="left:1221px;top:284px" width="17" height="16" viewBox="0 0 17 16"><path d="M1 6L8 3L16 6L9 9Z" fill="#d0564a"/><path d="M1 6L9 9V15.5L1 12.5Z" fill="#b8392d"/><path d="M9 9L16 6V12.5L9 15.5Z" fill="#8e2820"/><path d="M1 6L9 9L16 6M9 9V15.5M3 8.5l5 2" fill="none" stroke="#f2a597" stroke-width=".7"/><path d="M5 4.6L9.5 2.6L12.5 3.8" fill="none" stroke="#2a2a2a" stroke-width="1.4"/><rect x="4.3" y="9" width="1.4" height="2.2" fill="#222"/><rect x="4.5" y="8" width="1" height="1" fill="#ddd"/></svg>
<div class="t" style="left:1242px;top:286.12px;font-size:11.7px;">Linear Referencing Tools</div>
<svg style="left:1206px;top:307px" width="9" height="9" viewBox="0 0 9 9"><rect x="0.5" y="0.5" width="8" height="8" fill="#f4f4f4" stroke="#9aa0a8"/><path d="M2 4.5h5" stroke="#2b3f8a"/></svg>
<svg style="left:1221px;top:302px" width="17" height="16" viewBox="0 0 17 16"><path d="M1 6L8 3L16 6L9 9Z" fill="#d0564a"/><path d="M1 6L9 9V15.5L1 12.5Z" fill="#b8392d"/><path d="M9 9L16 6V12.5L9 15.5Z" fill="#8e2820"/><path d="M1 6L9 9L16 6M9 9V15.5M3 8.5l5 2" fill="none" stroke="#f2a597" stroke-width=".7"/><path d="M5 4.6L9.5 2.6L12.5 3.8" fill="none" stroke="#2a2a2a" stroke-width="1.4"/><rect x="4.3" y="9" width="1.4" height="2.2" fill="#222"/><rect x="4.5" y="8" width="1" height="1" fill="#ddd"/></svg>
<div class="t" style="left:1242px;top:304.12px;font-size:11.7px;">MapQonverter</div>
<div class="a" style="left:1258px;top:320px;width:207px;height:16px;background:#ececec"></div>
<svg style="left:1242px;top:321px" width="15" height="17" viewBox="0 0 15 17"><path d="M4 1.5h8.5l-3 13h-8z" fill="#e4f2fb" stroke="#6aa6d6" stroke-width="1"/><path d="M5 4h5M4.6 6h5M4.2 8h5M3.8 10h5" stroke="#3a6a9a" stroke-width="1"/><circle cx="12.6" cy="2.6" r="1.8" fill="#2a70b8"/><path d="M0.5 13.5q1 3 4.5 2.5l4.5-1.5l-1-2.5h-6z" fill="#7fbdea" stroke="#2a70b8" stroke-width=".8"/></svg>
<div class="t" style="left:1261px;top:322.12px;font-size:11.7px;">Export ArcMap Project to QGIS project</div>
<svg style="left:1242px;top:339px" width="15" height="17" viewBox="0 0 15 17"><path d="M4 1.5h8.5l-3 13h-8z" fill="#e4f2fb" stroke="#6aa6d6" stroke-width="1"/><path d="M5 4h5M4.6 6h5M4.2 8h5M3.8 10h5" stroke="#3a6a9a" stroke-width="1"/><circle cx="12.6" cy="2.6" r="1.8" fill="#2a70b8"/><path d="M0.5 13.5q1 3 4.5 2.5l4.5-1.5l-1-2.5h-6z" fill="#7fbdea" stroke="#2a70b8" stroke-width=".8"/></svg>
<div class="t" style="left:1261px;top:340.12px;font-size:11.7px;">Export Style Gallery</div>
<svg style="left:1242px;top:357px" width="15" height="17" viewBox="0 0 15 17"><path d="M4 1.5h8.5l-3 13h-8z" fill="#e4f2fb" stroke="#6aa6d6" stroke-width="1"/><path d="M5 4h5M4.6 6h5M4.2 8h5M3.8 10h5" stroke="#3a6a9a" stroke-width="1"/><circle cx="12.6" cy="2.6" r="1.8" fill="#2a70b8"/><path d="M0.5 13.5q1 3 4.5 2.5l4.5-1.5l-1-2.5h-6z" fill="#7fbdea" stroke="#2a70b8" stroke-width=".8"/></svg>
<div class="t" style="left:1261px;top:358.12px;font-size:11.7px;">Import QGIS project</div>
<svg style="left:1206px;top:379px" width="9" height="9" viewBox="0 0 9 9"><rect x="0.5" y="0.5" width="8" height="8" fill="#f4f4f4" stroke="#9aa0a8"/><path d="M2 4.5h5" stroke="#2b3f8a"/><path d="M4.5 2v5" stroke="#2b3f8a"/></svg>
<svg style="left:1221px;top:374px" width="17" height="16" viewBox="0 0 17 16"><path d="M1 6L8 3L16 6L9 9Z" fill="#d0564a"/><path d="M1 6L9 9V15.5L1 12.5Z" fill="#b8392d"/><path d="M9 9L16 6V12.5L9 15.5Z" fill="#8e2820"/><path d="M1 6L9 9L16 6M9 9V15.5M3 8.5l5 2" fill="none" stroke="#f2a597" stroke-width=".7"/><path d="M5 4.6L9.5 2.6L12.5 3.8" fill="none" stroke="#2a2a2a" stroke-width="1.4"/><rect x="4.3" y="9" width="1.4" height="2.2" fill="#222"/><rect x="4.5" y="8" width="1" height="1" fill="#ddd"/></svg>
<div class="t" style="left:1242px;top:376.12px;font-size:11.7px;">Multidimension Tools</div>
<svg style="left:1206px;top:397px" width="9" height="9" viewBox="0 0 9 9"><rect x="0.5" y="0.5" width="8" height="8" fill="#f4f4f4" stroke="#9aa0a8"/><path d="M2 4.5h5" stroke="#2b3f8a"/><path d="M4.5 2v5" stroke="#2b3f8a"/></svg>
<svg style="left:1221px;top:392px" width="17" height="16" viewBox="0 0 17 16"><path d="M1 6L8 3L16 6L9 9Z" fill="#d0564a"/><path d="M1 6L9 9V15.5L1 12.5Z" fill="#b8392d"/><path d="M9 9L16 6V12.5L9 15.5Z" fill="#8e2820"/><path d="M1 6L9 9L16 6M9 9V15.5M3 8.5l5 2" fill="none" stroke="#f2a597" stroke-width=".7"/><path d="M5 4.6L9.5 2.6L12.5 3.8" fill="none" stroke="#2a2a2a" stroke-width="1.4"/><rect x="4.3" y="9" width="1.4" height="2.2" fill="#222"/><rect x="4.5" y="8" width="1" height="1" fill="#ddd"/></svg>
<div class="t" style="left:1242px;top:394.12px;font-size:11.7px;">Network Analyst Tools</div>
<svg style="left:1206px;top:415px" width="9" height="9" viewBox="0 0 9 9"><rect x="0.5" y="0.5" width="8" height="8" fill="#f4f4f4" stroke="#9aa0a8"/><path d="M2 4.5h5" stroke="#2b3f8a"/><path d="M4.5 2v5" stroke="#2b3f8a"/></svg>
<svg style="left:1221px;top:410px" width="17" height="16" viewBox="0 0 17 16"><path d="M1 6L8 3L16 6L9 9Z" fill="#d0564a"/><path d="M1 6L9 9V15.5L1 12.5Z" fill="#b8392d"/><path d="M9 9L16 6V12.5L9 15.5Z" fill="#8e2820"/><path d="M1 6L9 9L16 6M9 9V15.5M3 8.5l5 2" fill="none" stroke="#f2a597" stroke-width=".7"/><path d="M5 4.6L9.5 2.6L12.5 3.8" fill="none" stroke="#2a2a2a" stroke-width="1.4"/><rect x="4.3" y="9" width="1.4" height="2.2" fill="#222"/><rect x="4.5" y="8" width="1" height="1" fill="#ddd"/><path d="M4 8h5l-1.5 6.5h-5z" fill="#cfe8f8" stroke="#3a80c0" stroke-width=".8"/><path d="M1 13q1 2.5 3.5 2l3-1l-1-1.5z" fill="#6ab0e8"/><path d="M4.5 10h3M4.2 12h3" stroke="#3a70a0" stroke-width=".7"/></svg>
<div class="t" style="left:1242px;top:412.12px;font-size:11.7px;">QGIS_Toolbox</div>
<svg style="left:1206px;top:433px" width="9" height="9" viewBox="0 0 9 9"><rect x="0.5" y="0.5" width="8" height="8" fill="#f4f4f4" stroke="#9aa0a8"/><path d="M2 4.5h5" stroke="#2b3f8a"/><path d="M4.5 2v5" stroke="#2b3f8a"/></svg>
<svg style="left:1221px;top:428px" width="17" height="16" viewBox="0 0 17 16"><path d="M1 6L8 3L16 6L9 9Z" fill="#d0564a"/><path d="M1 6L9 9V15.5L1 12.5Z" fill="#b8392d"/><path d="M9 9L16 6V12.5L9 15.5Z" fill="#8e2820"/><path d="M1 6L9 9L16 6M9 9V15.5M3 8.5l5 2" fill="none" stroke="#f2a597" stroke-width=".7"/><path d="M5 4.6L9.5 2.6L12.5 3.8" fill="none" stroke="#2a2a2a" stroke-width="1.4"/><rect x="4.3" y="9" width="1.4" height="2.2" fill="#222"/><rect x="4.5" y="8" width="1" height="1" fill="#ddd"/></svg>
<div class="t" style="left:1242px;top:430.12px;font-size:11.7px;">Schematics Tools</div>
<div class="a" style="left:1141px;top:288px;width:431px;height:102px;border:6px solid #ff0000"></div>
<div class="a" style="left:137px;top:435px;width:1346px;height:714px;background:#f0eff0;border:1px solid #b8b8b8;border-top-color:#5e5e5e;box-shadow:0 3px 14px rgba(0,0,0,.26)"></div>
<div class="a" style="left:138px;top:436px;width:1344px;height:30px;background:#fefefe"></div>
<div class="t" style="left:146px;top:445.12px;font-size:11.7px;">Export ArcMap Project to QGIS project</div>
<div class="a" style="left:1463px;top:443px;width:19px;height:19px;background:#c9504c"></div>
<svg style="left:1469px;top:449px" width="8" height="8" viewBox="0 0 8 8"><path d="M1 1L7 7M7 1L1 7" stroke="#fff" stroke-width="1.7"/></svg>
<div class="t" style="left:148px;top:478.12px;font-size:11.7px;;transform:scaleX(0.91);transform-origin:0 0">Completed</div>
<div class="a" style="left:1398px;top:480px;width:73px;height:21px;background:#e3e3e3;border:2px solid #0a64d6"></div>
<div class="a" style="left:1400px;top:482px;width:69px;height:17px;border:1px dotted #222"></div>
<div class="t" style="left:1421px;top:485.12px;font-size:11.7px;;transform:scaleX(0.85);transform-origin:0 0">Close</div>
<div class="a" style="left:1398px;top:514px;width:73px;height:21px;background:#e3e3e3;border:1px solid #adadad"></div>
<div class="t" style="left:1410px;top:519.12px;font-size:11.7px;;transform:scaleX(0.89);transform-origin:0 0">&lt; &lt; Details</div>
<div class="a" style="left:148px;top:545px;width:13px;height:13px;background:#fff;border:1px solid #333"></div>
<div class="t" style="left:164px;top:546.12px;font-size:11.7px;;transform:scaleX(0.9);transform-origin:0 0">Close this dialog when completed successfully</div>
<div class="a" style="left:148px;top:568px;width:1323px;height:569px;background:#fff;border-top:2px solid #6e6e6e;border-left:2px solid #6e6e6e;border-right:1px solid #e3e3e3;border-bottom:1px solid #e3e3e3"></div>
<div class="a" style="left:1454px;top:570px;width:16px;height:566px;background:#f0eff0"></div>
<svg style="left:1457px;top:574px" width="10" height="6"><path d="M1 5l4-4l4 4" fill="none" stroke="#555" stroke-width="1.6"/></svg>
<svg style="left:1457px;top:1124px" width="10" height="6"><path d="M1 1l4 4l4-4" fill="none" stroke="#555" stroke-width="1.6"/></svg>
<div class="a" style="left:1455px;top:1041px;width:14px;height:78px;background:#cdcdcd"></div>
<div class="m" style="left:162px;top:571.7px;color:#000">60.</div>
<div class="m" style="left:199px;top:571.7px;color:#000">Layer: 10m_admin_0_boundary_lines_maritime_indicator</div>
<div class="m" style="left:687px;top:587.7px;color:#000">successful converted    - Feature-Layer</div>
<div class="m" style="left:162px;top:619.7px;color:#000">61.</div>
<div class="m" style="left:199px;top:619.7px;color:#000">Layer: 10m_admin_1_states_provinces_lines_shp</div>
<div class="m" style="left:687px;top:635.7px;color:#000">successful converted    - Feature-Layer</div>
<div class="m" style="left:162px;top:667.7px;color:#000">62.</div>
<div class="m" style="left:199px;top:667.7px;color:#000">Layer: 10m_geography_marine_polys</div>
<div class="m" style="left:247px;top:683.7px;color:#1f8a1f">Labels have been converted. Complex Labeling is not supported. Check QGIS-File for result!</div>
<div class="m" style="left:687px;top:699.7px;color:#000">successful converted    - Feature-Layer</div>
<div class="m" style="left:162px;top:731.7px;color:#000">63.</div>
<div class="m" style="left:199px;top:731.7px;color:#000">Layer: 10m_urban_areas</div>
<div class="m" style="left:687px;top:747.7px;color:#000">successful converted    - Feature-Layer</div>
<div class="m" style="left:162px;top:779.7px;color:#000">64.</div>
<div class="m" style="left:199px;top:779.7px;color:#000">Layer: 10m_admin_0_map_subunits</div>
<div class="m" style="left:247px;top:795.7px;color:#1f8a1f">Labels have been converted. Complex Labeling is not supported. Check QGIS-File for result!</div>
<div class="m" style="left:687px;top:811.7px;color:#000">successful converted    - Feature-Layer</div>
<div class="m" style="left:162px;top:843.7px;color:#000">65.</div>
<div class="m" style="left:199px;top:843.7px;color:#000">Layer: 10m_admin_0_breakaway_disputed_areas</div>
<div class="m" style="left:247px;top:859.7px;color:#1f8a1f">Labels have been converted. Complex Labeling is not supported. Check QGIS-File for result!</div>
<div class="m" style="left:687px;top:875.7px;color:#000">successful converted    - Feature-Layer</div>
<div class="m" style="left:162px;top:907.7px;color:#000">66.</div>
<div class="m" style="left:199px;top:907.7px;color:#000">Layer: 10m_admin_0_scale_ranks_with_minor_islands</div>
<div class="m" style="left:687px;top:923.7px;color:#000">successful converted    - Feature-Layer</div>
<div class="m" style="left:162px;top:955.7px;color:#000">67.</div>
<div class="m" style="left:199px;top:955.7px;color:#000">Layer: 10m_ocean</div>
<div class="m" style="left:687px;top:971.7px;color:#000">successful converted    - Feature-Layer</div>
<div class="m" style="left:160px;top:1003.7px;color:#000">Creating Layout</div>
<div class="m" style="left:160px;top:1019.7px;color:#000">Creating Metadata</div>
<div class="m" style="left:160px;top:1035.7px;color:#000">Project saved!</div>
<div class="m" style="left:160px;top:1051.7px;color:#000">QGIS-File written</div>
<div class="m" style="left:160px;top:1067.7px;color:#000"> and zipped.</div>
<div class="m" style="left:160px;top:1083.7px;color:#000">Completed script Mapqonverter...</div>
<div class="m" style="left:160px;top:1099.7px;color:#000">Succeeded at Tue Oct 12 16:20:00 2021 (Elapsed Time: 27,32 seconds)</div></body></html>
